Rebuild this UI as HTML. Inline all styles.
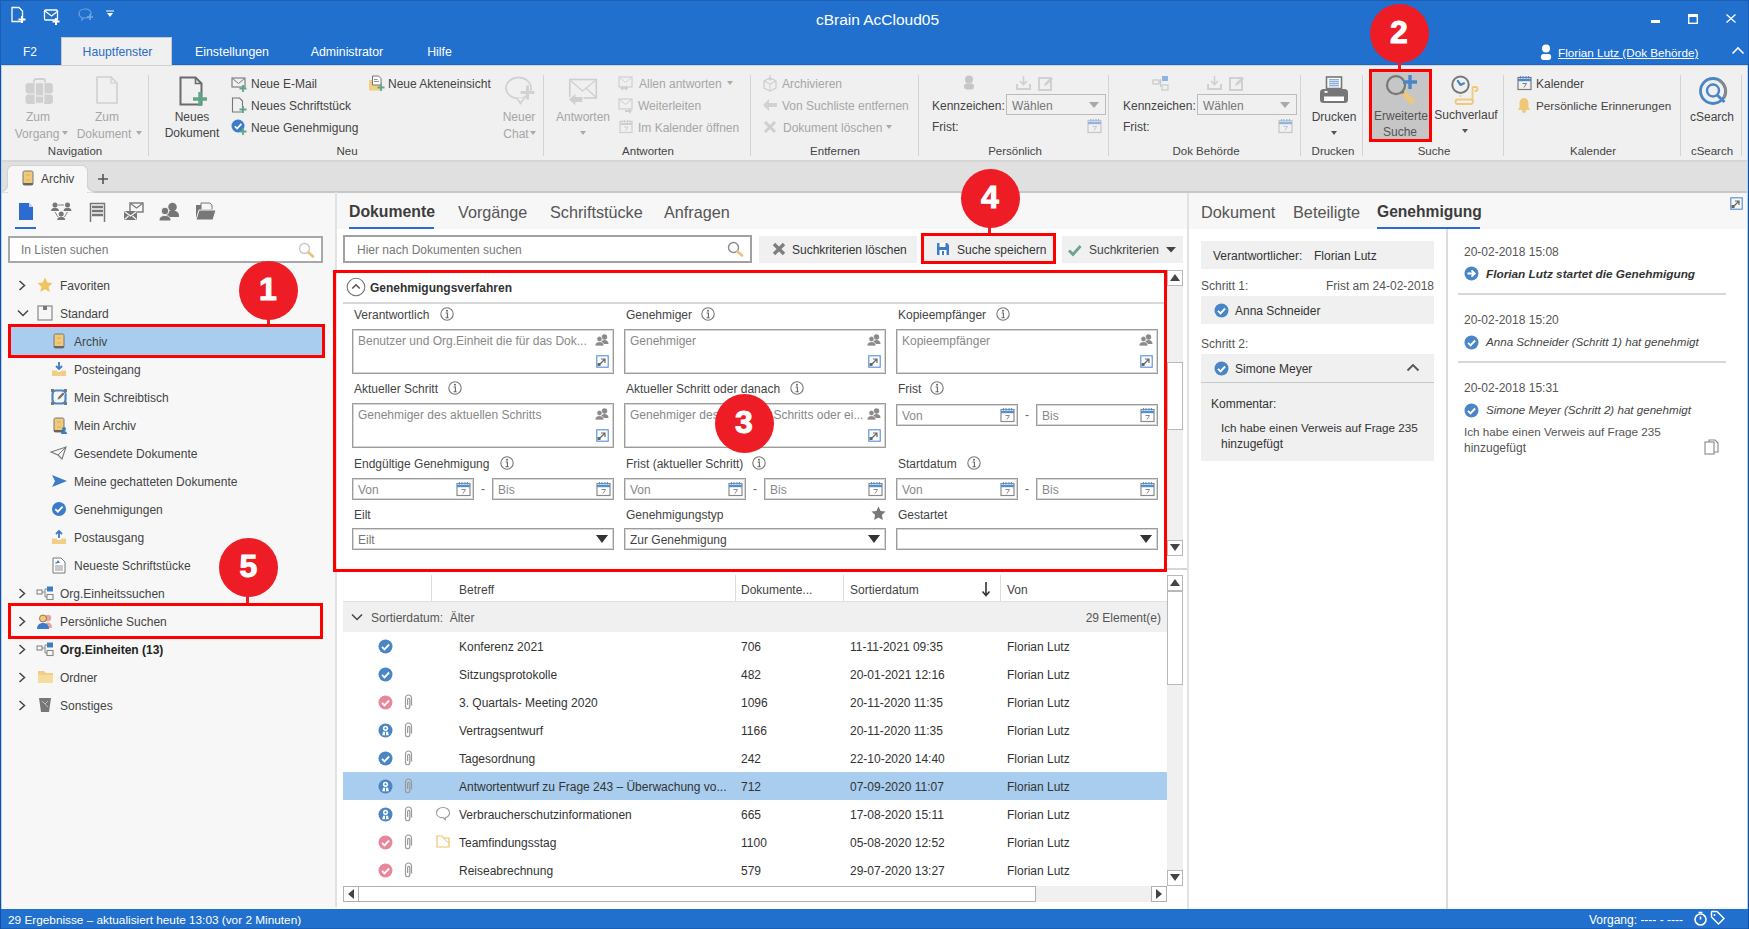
<!DOCTYPE html>
<html><head><meta charset="utf-8"><title>cBrain AcCloud05</title>
<style>
html,body{margin:0;padding:0;}
body{width:1749px;height:929px;position:relative;overflow:hidden;background:#f0f0f0;font-family:'Liberation Sans', sans-serif;}
.t{position:absolute;white-space:nowrap;height:20px;line-height:20px;font-family:'Liberation Sans', sans-serif;}
svg{overflow:visible}
</style></head><body>
<div style="position:absolute;left:0px;top:0px;width:1749px;height:65px;background:#2170ce;"></div>
<div style="position:absolute;left:0px;top:0px;width:1749px;height:1px;background:#1a5fb4;"></div>
<svg style="position:absolute;left:10px;top:6px" width="18" height="18" viewBox="0 0 18 18"><path d="M2 1.5h7l3.5 3.5v10.5h-10.5z" fill="none" stroke="#fff" stroke-width="1.3"/><path d="M12 10v7M8.5 13.5h7" stroke="#fff" stroke-width="2"/></svg>
<svg style="position:absolute;left:43px;top:8px" width="18" height="18" viewBox="0 0 18 18"><rect x="1.5" x2="" y="2" width="13" height="10" rx="1" fill="none" stroke="#fff" stroke-width="1.3"/><path d="M2 3l6.5 5 6.5-5" fill="none" stroke="#fff" stroke-width="1.2"/><path d="M13 10v7M9.5 13.5h7" stroke="#fff" stroke-width="2"/></svg>
<svg style="position:absolute;left:77px;top:6px" width="18" height="18" viewBox="0 0 18 18"><path d="M8 3c4 0 6 2.2 6 4.6S12 12 8 12c-.6 0-1 0-1.5-.1L5 14v-2.5C3 10.8 2 9.2 2 7.6 2 5.2 4 3 8 3z" fill="none" stroke="#6d9fdc" stroke-width="1.2"/><path d="M13 8v6M10 11h6" stroke="#7aa7df" stroke-width="1.6"/></svg>
<svg style="position:absolute;left:106px;top:10px" width="10" height="9" viewBox="0 0 10 9"><path d="M0 1h8" stroke="#fff" stroke-width="1"/><path d="M1 3h6l-3 4z" fill="#fff"/></svg>
<div class="t" style="left:577.5px;width:600px;text-align:center;top:10.0px;font-size:15.5px;color:#fff;font-weight:normal;font-style:normal;">cBrain AcCloud05</div>
<div style="position:absolute;left:1651px;top:20px;width:9px;height:3px;background:#fff;"></div>
<svg style="position:absolute;left:1688px;top:14px" width="10" height="10" viewBox="0 0 10 10"><rect x="0.7" y="0.7" width="8.6" height="8.6" fill="none" stroke="#fff" stroke-width="1.4"/><rect x="0" y="0" width="10" height="3" fill="#fff"/></svg>
<svg style="position:absolute;left:1726px;top:14px" width="10" height="9" viewBox="0 0 10 9"><path d="M0.5 0.5l9 8M9.5 0.5l-9 8" stroke="#fff" stroke-width="1.3"/></svg>
<div style="position:absolute;left:61px;top:37px;width:111px;height:28px;background:#f0f0f0;border:1px solid #c9c9c9;box-sizing:border-box;border-bottom:none;"></div>
<div class="t" style="left:-270px;width:600px;text-align:center;top:42.0px;font-size:12px;color:#fff;font-weight:normal;font-style:normal;">F2</div>
<div class="t" style="left:-182.5px;width:600px;text-align:center;top:42.0px;font-size:12.2px;color:#2b6cc4;font-weight:normal;font-style:normal;">Hauptfenster</div>
<div class="t" style="left:-68px;width:600px;text-align:center;top:42.0px;font-size:12.3px;color:#fff;font-weight:normal;font-style:normal;">Einstellungen</div>
<div class="t" style="left:47px;width:600px;text-align:center;top:42.0px;font-size:12.3px;color:#fff;font-weight:normal;font-style:normal;">Administrator</div>
<div class="t" style="left:139.5px;width:600px;text-align:center;top:42.0px;font-size:12.3px;color:#fff;font-weight:normal;font-style:normal;">Hilfe</div>
<svg style="position:absolute;left:1538px;top:44px" width="16" height="17" viewBox="0 0 16 17"><circle cx="8" cy="4.6" r="4" fill="#fff"/><rect x="2.8" y="10" width="10.4" height="6" rx="3" fill="#fff"/></svg>
<div class="t" style="left:1558px;top:43.0px;font-size:11.7px;color:#fff;font-weight:normal;font-style:normal;text-decoration:underline;">Florian Lutz (Dok Behörde)</div>
<svg style="position:absolute;left:1731px;top:46px" width="14" height="9" viewBox="0 0 14 9"><path d="M1.5 7.5l5.5-5.5 5.5 5.5" fill="none" stroke="#fff" stroke-width="1.6"/></svg>
<div style="position:absolute;left:0px;top:65px;width:1749px;height:96px;background:#f0f0f0;"></div>
<div style="position:absolute;left:0px;top:64px;width:61px;height:1px;background:#1b66c9;"></div>
<div style="position:absolute;left:172px;top:64px;width:1577px;height:1px;background:#1b66c9;"></div>
<div style="position:absolute;left:0px;top:65px;width:1749px;height:1px;background:#d2d2d2;"></div>
<div style="position:absolute;left:0px;top:160px;width:1749px;height:1px;background:#d5d5d5;"></div>
<svg style="position:absolute;left:24px;top:77px" width="31" height="28" viewBox="0 0 31 28"><rect x="1.5" y="6" width="27.5" height="10.5" rx="3" fill="#d0d0d0"/><rect x="1.5" y="17.5" width="27.5" height="9.5" rx="3" fill="#d0d0d0"/><path d="M10 5.5V4a2 2 0 0 1 2-2h7a2 2 0 0 1 2 2v1.5" fill="none" stroke="#d0d0d0" stroke-width="1.8"/><rect x="11.2" y="5.5" width="8.6" height="21" rx="1.5" fill="#d0d0d0" stroke="#ececec" stroke-width="1.4"/><path d="M11.5 19h8" stroke="#ececec" stroke-width="1.2"/></svg>
<div class="t" style="left:-262px;width:600px;text-align:center;top:107.0px;font-size:12px;color:#a6a6a6;font-weight:normal;font-style:normal;">Zum</div>
<div class="t" style="left:-263px;width:600px;text-align:center;top:123.5px;font-size:12px;color:#a6a6a6;font-weight:normal;font-style:normal;">Vorgang</div>
<svg style="position:absolute;left:62.0px;top:131px" width="6" height="4" viewBox="0 0 6 4"><path d="M0 0h6l-3.0 4z" fill="#aaa"/></svg>
<svg style="position:absolute;left:96px;top:76px" width="23" height="28" viewBox="0 0 23 28"><path d="M1 1h14l6 6v20H1z" fill="none" stroke="#d0d0d0" stroke-width="1.6"/><path d="M15 1v6h6" fill="none" stroke="#d0d0d0" stroke-width="1.2"/></svg>
<div class="t" style="left:-193px;width:600px;text-align:center;top:107.0px;font-size:12px;color:#a6a6a6;font-weight:normal;font-style:normal;">Zum</div>
<div class="t" style="left:-196px;width:600px;text-align:center;top:123.5px;font-size:12px;color:#a6a6a6;font-weight:normal;font-style:normal;">Dokument</div>
<svg style="position:absolute;left:136.0px;top:131px" width="6" height="4" viewBox="0 0 6 4"><path d="M0 0h6l-3.0 4z" fill="#aaa"/></svg>
<div class="t" style="left:-225px;width:600px;text-align:center;top:140.5px;font-size:11.5px;color:#444;font-weight:normal;font-style:normal;">Navigation</div>
<div style="position:absolute;left:148px;top:75px;width:1px;height:81px;background:#d4d4d4;"></div>
<svg style="position:absolute;left:179px;top:76px" width="30" height="32" viewBox="0 0 30 32"><path d="M1.5 1.5h15l6 6v21h-21z" fill="none" stroke="#6b6b6b" stroke-width="2"/><path d="M16.5 1.5v6h6" fill="none" stroke="#6b6b6b" stroke-width="1.6"/><path d="M21 16v14M14 23h14" stroke="#5fa688" stroke-width="3.4"/></svg>
<div class="t" style="left:-108px;width:600px;text-align:center;top:107.0px;font-size:12px;color:#444;font-weight:normal;font-style:normal;">Neues</div>
<div class="t" style="left:-108px;width:600px;text-align:center;top:122.5px;font-size:12px;color:#444;font-weight:normal;font-style:normal;">Dokument</div>
<svg style="position:absolute;left:231px;top:76px" width="17" height="16" viewBox="0 0 17 16"><rect x="1" y="2" width="13" height="9" fill="none" stroke="#777" stroke-width="1.1"/><path d="M1.5 2.5l6 5 6-5" fill="none" stroke="#777" stroke-width="1"/><path d="M12 9v7M8.5 12.5h7" stroke="#5fa688" stroke-width="1.8"/></svg>
<div class="t" style="left:251px;top:74.0px;font-size:12px;color:#444;font-weight:normal;font-style:normal;">Neue E-Mail</div>
<svg style="position:absolute;left:231px;top:97px" width="17" height="17" viewBox="0 0 17 17"><path d="M1.5 1h7l3 3v11h-10z" fill="none" stroke="#777" stroke-width="1.1"/><path d="M12 9v7M8.5 12.5h7" stroke="#5fa688" stroke-width="1.8"/></svg>
<div class="t" style="left:251px;top:96.0px;font-size:12px;color:#444;font-weight:normal;font-style:normal;">Neues Schriftstück</div>
<svg style="position:absolute;left:231px;top:119px" width="17" height="17" viewBox="0 0 17 17"><circle cx="7" cy="7" r="6.5" fill="#3d7cc9"/><path d="M3.8 7.2l2.3 2.3 4.3-4.6" fill="none" stroke="#fff" stroke-width="1.6"/><path d="M12 9v7M8.5 12.5h7" stroke="#5fa688" stroke-width="1.8"/></svg>
<div class="t" style="left:251px;top:118.0px;font-size:12px;color:#444;font-weight:normal;font-style:normal;">Neue Genehmigung</div>
<svg style="position:absolute;left:368px;top:75px" width="17" height="17" viewBox="0 0 17 17"><path d="M1 5h4l1.5 1.5H14v9H1z" fill="#f0cf85"/><path d="M4.5 1h6l2.5 2.5V10h-8.5z" fill="#fff" stroke="#777" stroke-width="1"/><path d="M6 4.5h3.5M6 6.5h5" stroke="#888" stroke-width=".9"/><path d="M13 9v7M9.5 12.5h7" stroke="#5fa688" stroke-width="1.8"/></svg>
<div class="t" style="left:388px;top:74.0px;font-size:12px;color:#444;font-weight:normal;font-style:normal;">Neue Akteneinsicht</div>
<svg style="position:absolute;left:504px;top:76px" width="32" height="30" viewBox="0 0 32 30"><ellipse cx="14.5" cy="12" rx="12.5" ry="10.5" fill="none" stroke="#d2d2d2" stroke-width="1.8"/><path d="M13 22L16.5 27.5L20.5 21.5" fill="#f0f0f0" stroke="#d2d2d2" stroke-width="1.6"/><path d="M23.5 9.5v14M16.5 16.5h14" stroke="#d2d2d2" stroke-width="3"/></svg>
<div class="t" style="left:219px;width:600px;text-align:center;top:107.0px;font-size:12px;color:#a6a6a6;font-weight:normal;font-style:normal;">Neuer</div>
<div class="t" style="left:216px;width:600px;text-align:center;top:123.5px;font-size:12px;color:#a6a6a6;font-weight:normal;font-style:normal;">Chat</div>
<svg style="position:absolute;left:530.0px;top:131px" width="6" height="4" viewBox="0 0 6 4"><path d="M0 0h6l-3.0 4z" fill="#aaa"/></svg>
<div class="t" style="left:47px;width:600px;text-align:center;top:140.5px;font-size:11.5px;color:#444;font-weight:normal;font-style:normal;">Neu</div>
<div style="position:absolute;left:543px;top:75px;width:1px;height:81px;background:#d4d4d4;"></div>
<svg style="position:absolute;left:567px;top:77px" width="32" height="30" viewBox="0 0 32 30"><rect x="2.8" y="2.5" width="26.5" height="18.5" fill="none" stroke="#cfcfcf" stroke-width="1.7"/><path d="M3.5 3.5L15.5 14L28.5 3.5M19.5 11.5L28.5 20" fill="none" stroke="#cfcfcf" stroke-width="1.3"/><path d="M1 22.5L9 15.5v4h7v6h-7v4z" fill="#cfcfcf" stroke="#f0f0f0" stroke-width="1.2"/></svg>
<div class="t" style="left:283px;width:600px;text-align:center;top:107.0px;font-size:12px;color:#a6a6a6;font-weight:normal;font-style:normal;">Antworten</div>
<svg style="position:absolute;left:580.0px;top:131px" width="6" height="4" viewBox="0 0 6 4"><path d="M0 0h6l-3.0 4z" fill="#aaa"/></svg>
<svg style="position:absolute;left:618px;top:76px" width="16" height="16" viewBox="0 0 16 16"><rect x="1" y="1" width="13" height="10" fill="none" stroke="#cfcfcf" stroke-width="1.2"/><path d="M1.5 1.5l6 5 6-5" fill="none" stroke="#cfcfcf"/><path d="M2 12l3-3v2h5v2H5v2z M6 12l3-3v6z" fill="#cfcfcf"/></svg>
<div class="t" style="left:639px;top:74.0px;font-size:12px;color:#a6a6a6;font-weight:normal;font-style:normal;">Allen antworten</div>
<svg style="position:absolute;left:727.0px;top:81px" width="6" height="4" viewBox="0 0 6 4"><path d="M0 0h6l-3.0 4z" fill="#aaa"/></svg>
<svg style="position:absolute;left:618px;top:98px" width="16" height="16" viewBox="0 0 16 16"><rect x="1" y="1" width="13" height="10" fill="none" stroke="#cfcfcf" stroke-width="1.2"/><path d="M1.5 1.5l6 5 6-5" fill="none" stroke="#cfcfcf"/><path d="M14 13l-3-3v2H7v2h4v2z" fill="#cfcfcf"/></svg>
<div class="t" style="left:638px;top:96.0px;font-size:12px;color:#a6a6a6;font-weight:normal;font-style:normal;">Weiterleiten</div>
<svg style="position:absolute;left:619px;top:119px" width="15" height="15" viewBox="0 0 15 15"><rect x="1" y="2.5" width="12" height="11" fill="none" stroke="#cfcfcf" stroke-width="1.2"/><path d="M1 5h12" stroke="#cfcfcf" stroke-width="2"/><path d="M3 1v2.5M5.5 1v2.5M8.5 1v2.5M11 1v2.5" stroke="#cfcfcf"/><path d="M5 8h4l-2.5 4" fill="none" stroke="#cfcfcf"/></svg>
<div class="t" style="left:638px;top:118.0px;font-size:12px;color:#a6a6a6;font-weight:normal;font-style:normal;">Im Kalender öffnen</div>
<div class="t" style="left:348px;width:600px;text-align:center;top:140.5px;font-size:11.5px;color:#444;font-weight:normal;font-style:normal;">Antworten</div>
<div style="position:absolute;left:750px;top:75px;width:1px;height:81px;background:#d4d4d4;"></div>
<svg style="position:absolute;left:762px;top:75px" width="16" height="16" viewBox="0 0 16 16"><path d="M2 6l6-3 6 3v7l-6 3-6-3z" fill="none" stroke="#cfcfcf" stroke-width="1.3"/><path d="M2 6l6 3 6-3M8 9v7" fill="none" stroke="#cfcfcf" stroke-width="1.1"/><path d="M8 0v5M6 3l2 2 2-2" fill="none" stroke="#cfcfcf" stroke-width="1.2"/></svg>
<div class="t" style="left:782px;top:74.0px;font-size:12px;color:#a6a6a6;font-weight:normal;font-style:normal;">Archivieren</div>
<svg style="position:absolute;left:762px;top:98px" width="16" height="14" viewBox="0 0 16 14"><path d="M1 7l6-6v4h8v4H7v4z" fill="#d2d2d2"/></svg>
<div class="t" style="left:782px;top:96.0px;font-size:12px;color:#a6a6a6;font-weight:normal;font-style:normal;">Von Suchliste entfernen</div>
<svg style="position:absolute;left:763px;top:120px" width="14" height="14" viewBox="0 0 14 14"><path d="M2 2l10 10M12 2L2 12" stroke="#cfcfcf" stroke-width="3"/></svg>
<div class="t" style="left:783px;top:118.0px;font-size:12px;color:#a6a6a6;font-weight:normal;font-style:normal;">Dokument löschen</div>
<svg style="position:absolute;left:886.0px;top:125px" width="6" height="4" viewBox="0 0 6 4"><path d="M0 0h6l-3.0 4z" fill="#aaa"/></svg>
<div class="t" style="left:535px;width:600px;text-align:center;top:140.5px;font-size:11.5px;color:#444;font-weight:normal;font-style:normal;">Entfernen</div>
<div style="position:absolute;left:918px;top:75px;width:1px;height:81px;background:#d4d4d4;"></div>
<svg style="position:absolute;left:962px;top:75px" width="14" height="16" viewBox="0 0 14 16"><circle cx="7" cy="4.6" r="4" fill="#c6c6c6"/><rect x="2" y="8.6" width="10" height="6" rx="3" fill="#c6c6c6"/></svg>
<svg style="position:absolute;left:1016px;top:76px" width="15" height="14" viewBox="0 0 15 14"><path d="M7.5 0v8M4 5l3.5 3.5L11 5" fill="none" stroke="#d0d0d0" stroke-width="1.6"/><path d="M1 8v5h13V8" fill="none" stroke="#d0d0d0" stroke-width="2"/></svg>
<svg style="position:absolute;left:1038px;top:76px" width="16" height="15" viewBox="0 0 16 15"><rect x="1" y="2" width="12" height="12" fill="none" stroke="#d0d0d0" stroke-width="2"/><path d="M6 10l1-3 6-6 2 2-6 6z" fill="#d0d0d0"/></svg>
<div class="t" style="left:932px;top:96.0px;font-size:12px;color:#444;font-weight:normal;font-style:normal;">Kennzeichen:</div>
<div style="position:absolute;left:1006px;top:94px;width:100px;height:21px;background:#f0f0f0;border:1.5px solid #bcbcbc;box-sizing:border-box;"></div>
<div class="t" style="left:1012px;top:95.5px;font-size:12px;color:#777;font-weight:normal;font-style:normal;">Wählen</div>
<svg style="position:absolute;left:1089px;top:102px" width="10" height="6" viewBox="0 0 10 6"><path d="M0 0h10l-5 6z" fill="#a8a8a8"/></svg>
<div class="t" style="left:932px;top:117.0px;font-size:12px;color:#444;font-weight:normal;font-style:normal;">Frist:</div>
<svg style="position:absolute;left:1087px;top:118px" width="15" height="15" viewBox="0 0 15 15"><rect x="1" y="2.5" width="13" height="12" fill="none" stroke="#c6c6c6" stroke-width="1.2"/><path d="M1 5h13" stroke="#8fb4e0" stroke-width="2.4"/><path d="M3.5 1v2.5M6 1v2.5M9 1v2.5M11.5 1v2.5" stroke="#8fb4e0"/><path d="M5.5 8.5h4l-2.5 4" fill="none" stroke="#c6c6c6" stroke-width="1"/></svg>
<div class="t" style="left:715px;width:600px;text-align:center;top:140.5px;font-size:11.5px;color:#444;font-weight:normal;font-style:normal;">Persönlich</div>
<div style="position:absolute;left:1108px;top:75px;width:1px;height:81px;background:#d4d4d4;"></div>
<svg style="position:absolute;left:1152px;top:75px" width="17" height="16" viewBox="0 0 17 16"><rect x="1" y="5" width="6" height="4" fill="none" stroke="#c9c9c9" stroke-width="1.2"/><rect x="10" y="1" width="6" height="5" fill="#8fb4e0"/><rect x="10" y="10" width="6" height="5" fill="none" stroke="#c9c9c9" stroke-width="1.2"/><path d="M7 7h3M8.5 4v8" fill="none" stroke="#c9c9c9"/></svg>
<svg style="position:absolute;left:1207px;top:76px" width="15" height="14" viewBox="0 0 15 14"><path d="M7.5 0v8M4 5l3.5 3.5L11 5" fill="none" stroke="#d0d0d0" stroke-width="1.6"/><path d="M1 8v5h13V8" fill="none" stroke="#d0d0d0" stroke-width="2"/></svg>
<svg style="position:absolute;left:1229px;top:76px" width="16" height="15" viewBox="0 0 16 15"><rect x="1" y="2" width="12" height="12" fill="none" stroke="#d0d0d0" stroke-width="2"/><path d="M6 10l1-3 6-6 2 2-6 6z" fill="#d0d0d0"/></svg>
<div class="t" style="left:1123px;top:96.0px;font-size:12px;color:#444;font-weight:normal;font-style:normal;">Kennzeichen:</div>
<div style="position:absolute;left:1197px;top:94px;width:100px;height:21px;background:#f0f0f0;border:1.5px solid #bcbcbc;box-sizing:border-box;"></div>
<div class="t" style="left:1203px;top:95.5px;font-size:12px;color:#777;font-weight:normal;font-style:normal;">Wählen</div>
<svg style="position:absolute;left:1280px;top:102px" width="10" height="6" viewBox="0 0 10 6"><path d="M0 0h10l-5 6z" fill="#a8a8a8"/></svg>
<div class="t" style="left:1123px;top:117.0px;font-size:12px;color:#444;font-weight:normal;font-style:normal;">Frist:</div>
<svg style="position:absolute;left:1278px;top:118px" width="15" height="15" viewBox="0 0 15 15"><rect x="1" y="2.5" width="13" height="12" fill="none" stroke="#c6c6c6" stroke-width="1.2"/><path d="M1 5h13" stroke="#8fb4e0" stroke-width="2.4"/><path d="M3.5 1v2.5M6 1v2.5M9 1v2.5M11.5 1v2.5" stroke="#8fb4e0"/><path d="M5.5 8.5h4l-2.5 4" fill="none" stroke="#c6c6c6" stroke-width="1"/></svg>
<div class="t" style="left:906px;width:600px;text-align:center;top:140.5px;font-size:11.5px;color:#444;font-weight:normal;font-style:normal;">Dok Behörde</div>
<div style="position:absolute;left:1300px;top:75px;width:1px;height:81px;background:#d4d4d4;"></div>
<svg style="position:absolute;left:1319px;top:76px" width="30" height="28" viewBox="0 0 30 28"><rect x="7.5" y="1" width="15" height="11.5" fill="#fff" stroke="#777" stroke-width="1.6"/><path d="M10 3.8h10M10 5.8h10M10 7.8h10M10 9.8h10" stroke="#5b8fd0" stroke-width="1"/><rect x="1" y="13" width="28" height="14" rx="3.5" fill="#777"/><rect x="5" y="20.5" width="20" height="4.5" fill="#fff"/><rect x="5.5" y="15" width="3" height="1.8" fill="#fff"/></svg>
<div class="t" style="left:1034px;width:600px;text-align:center;top:107.0px;font-size:12px;color:#444;font-weight:normal;font-style:normal;">Drucken</div>
<svg style="position:absolute;left:1331.0px;top:131px" width="6" height="4" viewBox="0 0 6 4"><path d="M0 0h6l-3.0 4z" fill="#555"/></svg>
<div class="t" style="left:1033px;width:600px;text-align:center;top:140.5px;font-size:11.5px;color:#444;font-weight:normal;font-style:normal;">Drucken</div>
<div style="position:absolute;left:1362px;top:75px;width:1px;height:81px;background:#d4d4d4;"></div>
<div style="position:absolute;left:1372px;top:72px;width:57px;height:67px;background:#c6c6c6;"></div>
<svg style="position:absolute;left:1385px;top:74px" width="33" height="32" viewBox="0 0 33 32"><circle cx="11" cy="11.2" r="9" fill="none" stroke="#777" stroke-width="2.2"/><path d="M16.5 17l2.5 2.5" stroke="#777" stroke-width="2.6"/><path d="M18.7 19.2L28.5 29" stroke="#f0c87a" stroke-width="5.2"/><path d="M25 1v14M18 8h14" stroke="#4a86c5" stroke-width="3.4"/></svg>
<div class="t" style="left:1101px;width:600px;text-align:center;top:106.0px;font-size:12px;color:#555;font-weight:normal;font-style:normal;">Erweiterte</div>
<div class="t" style="left:1100px;width:600px;text-align:center;top:121.5px;font-size:12px;color:#555;font-weight:normal;font-style:normal;">Suche</div>
<svg style="position:absolute;left:1450px;top:74px" width="32" height="32" viewBox="0 0 32 32"><circle cx="10.5" cy="10.7" r="8.2" fill="none" stroke="#777" stroke-width="2"/><path d="M10.5 10.9L7.8 6.8M10.5 10.9L14 9.3" stroke="#4a86c5" stroke-width="2.2" stroke-linecap="round"/><path d="M22.5 13v13.5M22.5 13h3a2 2 0 0 1 0 4h-1" fill="none" stroke="#f0c87a" stroke-width="1.8"/><rect x="5.5" y="25.5" width="17.5" height="4.5" rx="2.2" fill="none" stroke="#f0c87a" stroke-width="1.8"/><circle cx="10.5" cy="22" r="1" fill="#f0c87a"/></svg>
<div class="t" style="left:1166px;width:600px;text-align:center;top:105.0px;font-size:12px;color:#444;font-weight:normal;font-style:normal;">Suchverlauf</div>
<svg style="position:absolute;left:1462.0px;top:129px" width="6" height="4" viewBox="0 0 6 4"><path d="M0 0h6l-3.0 4z" fill="#555"/></svg>
<div class="t" style="left:1134px;width:600px;text-align:center;top:140.5px;font-size:11.5px;color:#444;font-weight:normal;font-style:normal;">Suche</div>
<div style="position:absolute;left:1503px;top:75px;width:1px;height:81px;background:#d4d4d4;"></div>
<svg style="position:absolute;left:1517px;top:75px" width="15" height="15" viewBox="0 0 15 15"><rect x="1" y="2.5" width="13" height="12" fill="none" stroke="#7a7a7a" stroke-width="1.2"/><path d="M1 5h13" stroke="#4a86d0" stroke-width="2.4"/><path d="M3.5 1v2.5M6 1v2.5M9 1v2.5M11.5 1v2.5" stroke="#4a86d0"/><path d="M5.5 8.5h4l-2.5 4" fill="none" stroke="#7a7a7a" stroke-width="1"/></svg>
<div class="t" style="left:1536px;top:74.0px;font-size:12px;color:#444;font-weight:normal;font-style:normal;">Kalender</div>
<svg style="position:absolute;left:1517px;top:97px" width="14" height="16" viewBox="0 0 14 16"><path d="M7 1c3 0 4.5 2.5 4.5 5.5v4L13 13H1l1.5-2.5v-4C2.5 3.5 4 1 7 1z" fill="#f0c87a"/><circle cx="7" cy="14" r="2" fill="#f0c87a"/></svg>
<div class="t" style="left:1536px;top:96.0px;font-size:11.75px;color:#444;font-weight:normal;font-style:normal;">Persönliche Erinnerungen</div>
<div class="t" style="left:1293px;width:600px;text-align:center;top:140.5px;font-size:11.5px;color:#444;font-weight:normal;font-style:normal;">Kalender</div>
<div style="position:absolute;left:1680px;top:75px;width:1px;height:81px;background:#d4d4d4;"></div>
<svg style="position:absolute;left:1698px;top:76px" width="30" height="30" viewBox="0 0 30 30"><circle cx="15" cy="15" r="12.5" fill="none" stroke="#4a86c5" stroke-width="2.8"/><path d="M21 4.5A12.5 12.5 0 0 1 26 22" fill="none" stroke="#888" stroke-width="2.8"/><circle cx="15" cy="14.5" r="6" fill="none" stroke="#4a86c5" stroke-width="2.4"/><path d="M19 19l7.5 7" stroke="#4a86c5" stroke-width="3"/></svg>
<div class="t" style="left:1412px;width:600px;text-align:center;top:107.0px;font-size:12px;color:#444;font-weight:normal;font-style:normal;">cSearch</div>
<div class="t" style="left:1412px;width:600px;text-align:center;top:140.5px;font-size:11.5px;color:#444;font-weight:normal;font-style:normal;">cSearch</div>
<div style="position:absolute;left:1741px;top:75px;width:1px;height:81px;background:#d4d4d4;"></div>
<div style="position:absolute;left:0px;top:161px;width:1749px;height:30px;background:#e0e0e0;"></div>
<div style="position:absolute;left:0px;top:161px;width:1749px;height:1px;background:#d6d6d6;"></div>
<div style="position:absolute;left:94px;top:191px;width:1655px;height:2px;background:#c8c8c8;"></div>
<div style="position:absolute;left:0px;top:186px;width:94px;height:7px;background:#e0e0e0;"></div>
<div style="position:absolute;left:7px;top:165px;width:81px;height:28px;background:#f7f7f7;border-radius:6px 6px 0 0;border:1px solid #d2d2d2;border-bottom:none;box-sizing:border-box"></div>
<svg style="position:absolute;left:22px;top:170px" width="12" height="16" viewBox="0 0 12 16"><rect x="1" y="1" width="10" height="14" rx="1.5" fill="#f1c97a" stroke="#777" stroke-width="1"/><path d="M1 14h10" stroke="#666" stroke-width="2"/><path d="M4 5h4M4 10h4" stroke="#d9a950" stroke-width=".8"/></svg>
<div class="t" style="left:41px;top:169.0px;font-size:12px;color:#444;font-weight:normal;font-style:normal;">Archiv</div>
<svg style="position:absolute;left:87px;top:185px" width="8" height="8" viewBox="0 0 8 8"><path d="M0 0A7 7 0 0 0 7 7H0z" fill="#f7f7f7"/><path d="M0.5 0A6.5 6.5 0 0 0 7 6.5" fill="none" stroke="#cfcfcf"/></svg>
<svg style="position:absolute;left:0px;top:185px" width="8" height="8" viewBox="0 0 8 8"><path d="M8 0A7 7 0 0 1 1 7H8z" fill="#f7f7f7"/><path d="M7.5 0A6.5 6.5 0 0 1 1 6.5" fill="none" stroke="#cfcfcf"/></svg>
<svg style="position:absolute;left:97px;top:173px" width="12" height="12" viewBox="0 0 12 12"><path d="M6 1v10M1 6h10" stroke="#555" stroke-width="1.6"/></svg>
<div style="position:absolute;left:0px;top:193px;width:1749px;height:716px;background:#f7f7f7;"></div>
<div style="position:absolute;left:335px;top:192px;width:2px;height:715px;background:#e2e2e2;"></div>
<div style="position:absolute;left:1187px;top:193px;width:2px;height:716px;background:#e2e2e2;"></div>
<svg style="position:absolute;left:18px;top:202px" width="16" height="19" viewBox="0 0 16 19"><path d="M1 1h10l4 4v13H1z" fill="#2d6ccf"/><path d="M11 1v4h4" fill="#fff" opacity=".7"/></svg>
<div style="position:absolute;left:15px;top:227px;width:21px;height:2px;background:#2d6ccf;"></div>
<svg style="position:absolute;left:51px;top:202px" width="21" height="20" viewBox="0 0 21 20"><circle cx="4" cy="3" r="2.5" fill="#777"/><circle cx="16.5" cy="3" r="2.5" fill="#777"/><circle cx="10.2" cy="12" r="2.5" fill="#777"/><path d="M0 9c0-2.5 2-3.3 4-3.3s4 .8 4 3.3zM12.5 9c0-2.5 2-3.3 4-3.3s4 .8 4 3.3zM6.2 18c0-2.5 2-3.3 4-3.3s4 .8 4 3.3z" fill="#777"/><path d="M7 3h6M4 10l3 5M16.5 10l-3 5" fill="none" stroke="#777" stroke-width=".9"/></svg>
<svg style="position:absolute;left:89px;top:202px" width="17" height="20" viewBox="0 0 17 20"><path d="M1.5 20V1.5h14V20" fill="none" stroke="#777" stroke-width="1.5"/><path d="M3 5h11M3 9h11M3 13h11" stroke="#777" stroke-width="2.6"/></svg>
<svg style="position:absolute;left:123px;top:202px" width="21" height="19" viewBox="0 0 21 19"><rect x="7" y="1" width="13" height="9" fill="#f7f7f7" stroke="#777" stroke-width="1.4"/><path d="M7.5 1.5l6 4.5 6-4.5" fill="none" stroke="#777" stroke-width="1.2"/><rect x="1" y="9" width="13" height="9" fill="#777"/><path d="M1.5 9.5l6 4.5 6-4.5M1.5 17.5l4-3.5M13.5 17.5l-4-3.5" fill="none" stroke="#f7f7f7" stroke-width="1.2"/></svg>
<svg style="position:absolute;left:159px;top:202px" width="20" height="19" viewBox="0 0 20 19"><circle cx="13.5" cy="5" r="4.3" fill="#777"/><path d="M7 14c0-4 3-5.5 6.5-5.5S20 10 20 14v1H7z" fill="#777"/><circle cx="6" cy="9" r="3.8" fill="#777" stroke="#f7f7f7" stroke-width="1"/><path d="M0 19c0-4 2.5-5.5 6-5.5s6 1.5 6 5.5z" fill="#777" stroke="#f7f7f7" stroke-width="1"/></svg>
<svg style="position:absolute;left:195px;top:202px" width="21" height="19" viewBox="0 0 21 19"><path d="M1 3h6l2 2h8v13H1z" fill="#777"/><path d="M6 1h9l2 2v5H6z" fill="#f7f7f7" stroke="#777" stroke-width="1"/><path d="M4 8h17l-3 10H1z" fill="#777" stroke="#f7f7f7" stroke-width="1"/></svg>
<div style="position:absolute;left:8px;top:236px;width:315px;height:27px;background:#fff;border:2px solid #a8a8a8;box-sizing:border-box;"></div>
<div class="t" style="left:21px;top:240.0px;font-size:12px;color:#777;font-weight:normal;font-style:normal;">In Listen suchen</div>
<svg style="position:absolute;left:298px;top:242px" width="18" height="16" viewBox="0 0 18 16"><circle cx="6.5" cy="6.5" r="5" fill="none" stroke="#c8c8c8" stroke-width="1.4"/><path d="M10.5 10.5l4.5 4" stroke="#e7c27a" stroke-width="2.6" stroke-linecap="round"/></svg>
<div style="position:absolute;left:10px;top:327px;width:313px;height:28px;background:#a8cdee;"></div>
<svg style="position:absolute;left:18px;top:280px" width="8" height="11" viewBox="0 0 8 11"><path d="M1.5 1l5 4.5-5 4.5" fill="none" stroke="#444" stroke-width="1.5"/></svg>
<svg style="position:absolute;left:37px;top:277px" width="16" height="16" viewBox="0 0 16 16"><path d="M8 .5l2.3 5 5.2.6-3.9 3.6 1.1 5.3L8 12.3 3.3 15l1.1-5.3L.5 6.1l5.2-.6z" fill="#f0c560"/></svg>
<div class="t" style="left:60px;top:276.0px;font-size:12px;color:#444;font-weight:normal;font-style:normal;">Favoriten</div>
<svg style="position:absolute;left:17px;top:309px" width="12" height="8" viewBox="0 0 12 8"><path d="M1 1.5l5 5 5-5" fill="none" stroke="#444" stroke-width="1.5"/></svg>
<svg style="position:absolute;left:37px;top:305px" width="16" height="16" viewBox="0 0 16 16"><rect x="1" y="1" width="14" height="14" fill="none" stroke="#888" stroke-width="1.2"/><rect x="6" y="1" width="4" height="4" fill="#777"/></svg>
<div class="t" style="left:60px;top:304.0px;font-size:12px;color:#444;font-weight:normal;font-style:normal;">Standard</div>
<svg style="position:absolute;left:53px;top:333px" width="14" height="17" viewBox="0 0 14 17"><rect x="1" y="1" width="10" height="14" rx="1.5" fill="#f1c97a" stroke="#777" stroke-width="1"/><path d="M1 14h10" stroke="#666" stroke-width="2"/><path d="M4 5h4M4 10h4" stroke="#d9a950" stroke-width=".8"/></svg>
<div class="t" style="left:74px;top:332.0px;font-size:12px;color:#444;font-weight:normal;font-style:normal;">Archiv</div>
<svg style="position:absolute;left:51px;top:361px" width="16" height="16" viewBox="0 0 16 16"><path d="M8 1v7M5 5l3 3 3-3" fill="none" stroke="#3d7cc9" stroke-width="1.8"/><path d="M1 9.5h4.5l1 1.5h3l1-1.5H15V15H1z" fill="#f0cf85"/></svg>
<div class="t" style="left:74px;top:360.0px;font-size:12px;color:#444;font-weight:normal;font-style:normal;">Posteingang</div>
<svg style="position:absolute;left:51px;top:389px" width="16" height="16" viewBox="0 0 16 16"><rect x="1.5" y="1.5" width="13" height="13" rx="3.5" fill="none" stroke="#4a86c5" stroke-width="2.2"/><path d="M0 0h3v3H0zM13 0h3v3h-3zM0 13h3v3H0zM13 13h3v3h-3z" fill="#777"/><path d="M6 11l1-3 5-5 2 2-5 5z" fill="#777" stroke="#f7f7f7" stroke-width=".6"/></svg>
<div class="t" style="left:74px;top:388.0px;font-size:12px;color:#444;font-weight:normal;font-style:normal;">Mein Schreibtisch</div>
<svg style="position:absolute;left:53px;top:417px" width="14" height="17" viewBox="0 0 14 17"><rect x="1" y="1" width="10" height="14" rx="1.5" fill="#f1c97a" stroke="#777" stroke-width="1"/><path d="M1 14h10" stroke="#666" stroke-width="2"/><path d="M4 5h4M4 10h4" stroke="#d9a950" stroke-width=".8"/><circle cx="11" cy="12" r="2" fill="#3d7cc9"/><path d="M8 17c0-2 1.3-3 3-3s3 1 3 3z" fill="#3d7cc9"/></svg>
<div class="t" style="left:74px;top:416.0px;font-size:12px;color:#444;font-weight:normal;font-style:normal;">Mein Archiv</div>
<svg style="position:absolute;left:50px;top:446px" width="17" height="14" viewBox="0 0 17 14"><path d="M1 6l15-5-4 12-4-4z" fill="none" stroke="#777" stroke-width="1.1"/><path d="M8 9l8-8" stroke="#777" stroke-width="1"/></svg>
<div class="t" style="left:74px;top:444.0px;font-size:12px;color:#444;font-weight:normal;font-style:normal;">Gesendete Dokumente</div>
<svg style="position:absolute;left:51px;top:474px" width="16" height="14" viewBox="0 0 16 14"><path d="M1 1l15 6-15 6 3-6z" fill="#3d7cc9"/></svg>
<div class="t" style="left:74px;top:472.0px;font-size:12px;color:#444;font-weight:normal;font-style:normal;">Meine gechatteten Dokumente</div>
<svg style="position:absolute;left:51px;top:501px" width="16" height="16" viewBox="0 0 16 16"><circle cx="8" cy="8" r="7" fill="#3d7cc9"/><path d="M4.3 8.2l2.5 2.5 4.8-5" fill="none" stroke="#fff" stroke-width="1.8"/></svg>
<div class="t" style="left:74px;top:500.0px;font-size:12px;color:#444;font-weight:normal;font-style:normal;">Genehmigungen</div>
<svg style="position:absolute;left:51px;top:529px" width="16" height="16" viewBox="0 0 16 16"><path d="M8 9V2M5 5l3-3 3 3" fill="none" stroke="#3d7cc9" stroke-width="1.8"/><path d="M1 9.5h4.5l1 1.5h3l1-1.5H15V15H1z" fill="#f0cf85"/></svg>
<div class="t" style="left:74px;top:528.0px;font-size:12px;color:#444;font-weight:normal;font-style:normal;">Postausgang</div>
<svg style="position:absolute;left:52px;top:557px" width="14" height="17" viewBox="0 0 14 17"><path d="M1 1h8l4 4v11H1z" fill="#fff" stroke="#777" stroke-width="1"/><path d="M3 6h3M3 9h8M3 11h8M3 13h8" stroke="#777" stroke-width=".8"/><path d="M6 3l2 3h-4z" fill="#3d7cc9"/></svg>
<div class="t" style="left:74px;top:556.0px;font-size:12px;color:#444;font-weight:normal;font-style:normal;">Neueste Schriftstücke</div>
<svg style="position:absolute;left:18px;top:588px" width="8" height="11" viewBox="0 0 8 11"><path d="M1.5 1l5 4.5-5 4.5" fill="none" stroke="#444" stroke-width="1.5"/></svg>
<svg style="position:absolute;left:36px;top:586px" width="18" height="14" viewBox="0 0 18 14"><rect x="1" y="4" width="5" height="4" fill="none" stroke="#888" stroke-width="1.1"/><rect x="11" y="0.5" width="6" height="5" fill="#3d7cc9"/><rect x="11" y="8.5" width="6" height="5" fill="none" stroke="#888" stroke-width="1.1"/><path d="M6 6h3M9 3v8h2M9 3h2" fill="none" stroke="#888"/></svg>
<div class="t" style="left:60px;top:584.0px;font-size:12px;color:#444;font-weight:normal;font-style:normal;">Org.Einheitssuchen</div>
<svg style="position:absolute;left:18px;top:616px" width="8" height="11" viewBox="0 0 8 11"><path d="M1.5 1l5 4.5-5 4.5" fill="none" stroke="#444" stroke-width="1.5"/></svg>
<svg style="position:absolute;left:37px;top:613px" width="16" height="16" viewBox="0 0 16 16"><circle cx="11" cy="5" r="3.3" fill="#e8a6a0"/><path d="M7 15c0-4 2-5.5 4-5.5s4 1.5 4 5.5z" fill="#e8a6a0"/><circle cx="6" cy="5.5" r="3.5" fill="#f1c97a" stroke="#8a5a3a" stroke-width=".8"/><path d="M0 16c0-4 2.5-6 6-6s6 2 6 6z" fill="#3d7cc9"/></svg>
<div class="t" style="left:60px;top:612.0px;font-size:12px;color:#444;font-weight:normal;font-style:normal;">Persönliche Suchen</div>
<svg style="position:absolute;left:18px;top:644px" width="8" height="11" viewBox="0 0 8 11"><path d="M1.5 1l5 4.5-5 4.5" fill="none" stroke="#444" stroke-width="1.5"/></svg>
<svg style="position:absolute;left:36px;top:642px" width="18" height="14" viewBox="0 0 18 14"><rect x="1" y="4" width="5" height="4" fill="none" stroke="#888" stroke-width="1.1"/><rect x="11" y="0.5" width="6" height="5" fill="#3d7cc9"/><rect x="11" y="8.5" width="6" height="5" fill="none" stroke="#888" stroke-width="1.1"/><path d="M6 6h3M9 3v8h2M9 3h2" fill="none" stroke="#888"/></svg>
<div class="t" style="left:60px;top:640.0px;font-size:12px;color:#222;font-weight:bold;font-style:normal;">Org.Einheiten (13)</div>
<svg style="position:absolute;left:18px;top:672px" width="8" height="11" viewBox="0 0 8 11"><path d="M1.5 1l5 4.5-5 4.5" fill="none" stroke="#444" stroke-width="1.5"/></svg>
<svg style="position:absolute;left:37px;top:669px" width="17" height="15" viewBox="0 0 17 15"><path d="M1 2h6l2 2h7v10H1z" fill="#f0cf85"/><path d="M1 6h15v8H1z" fill="#f6dc9f"/></svg>
<div class="t" style="left:60px;top:668.0px;font-size:12px;color:#444;font-weight:normal;font-style:normal;">Ordner</div>
<svg style="position:absolute;left:18px;top:700px" width="8" height="11" viewBox="0 0 8 11"><path d="M1.5 1l5 4.5-5 4.5" fill="none" stroke="#444" stroke-width="1.5"/></svg>
<svg style="position:absolute;left:38px;top:697px" width="14" height="16" viewBox="0 0 14 16"><path d="M1 1h12l-2 14H3z" fill="#777"/><path d="M4 4l6 6M10 4l-3 3" stroke="#bbb" stroke-width="1"/></svg>
<div class="t" style="left:60px;top:696.0px;font-size:12px;color:#444;font-weight:normal;font-style:normal;">Sonstiges</div>
<div style="position:absolute;left:337px;top:229px;width:850px;height:680px;background:#ffffff;"></div>
<div class="t" style="left:349px;top:202.0px;font-size:15.8px;color:#3c3c3c;font-weight:bold;font-style:normal;">Dokumente</div>
<div class="t" style="left:458px;top:202.0px;font-size:16.2px;color:#555;font-weight:normal;font-style:normal;">Vorgänge</div>
<div class="t" style="left:550px;top:202.0px;font-size:16.2px;color:#555;font-weight:normal;font-style:normal;">Schriftstücke</div>
<div class="t" style="left:664px;top:202.0px;font-size:16.2px;color:#555;font-weight:normal;font-style:normal;">Anfragen</div>
<div style="position:absolute;left:349px;top:227px;width:85px;height:2px;background:#2d6ccf;"></div>
<div style="position:absolute;left:343px;top:235px;width:409px;height:28px;background:#fff;border:2px solid #a0a0a0;box-sizing:border-box;"></div>
<div class="t" style="left:357px;top:240.0px;font-size:12px;color:#777;font-weight:normal;font-style:normal;">Hier nach Dokumenten suchen</div>
<svg style="position:absolute;left:727px;top:241px" width="18" height="16" viewBox="0 0 18 16"><circle cx="6.5" cy="6.5" r="5" fill="none" stroke="#8a8a8a" stroke-width="1.4"/><path d="M10.5 10.5l4.5 4" stroke="#e7c27a" stroke-width="2.6" stroke-linecap="round"/></svg>
<div style="position:absolute;left:759px;top:236px;width:158px;height:27px;background:#f0f0f0;"></div>
<svg style="position:absolute;left:772px;top:242px" width="14" height="14" viewBox="0 0 14 14"><path d="M2 2l10 10M12 2L2 12" stroke="#7f7f7f" stroke-width="3.4"/></svg>
<div class="t" style="left:792px;top:240.0px;font-size:12px;color:#333;font-weight:normal;font-style:normal;">Suchkriterien löschen</div>
<div style="position:absolute;left:924px;top:236px;width:130px;height:27px;background:#f0f0f0;"></div>
<svg style="position:absolute;left:936px;top:242px" width="14" height="14" viewBox="0 0 14 14"><path d="M1 1h10l2 2v10H1z" fill="#3d7cc9"/><rect x="3.5" y="1" width="6" height="4" fill="#fff"/><rect x="3.5" y="8" width="7" height="5" fill="#fff"/><rect x="6" y="9" width="2" height="4" fill="#3d7cc9"/></svg>
<div class="t" style="left:957px;top:240.0px;font-size:12px;color:#333;font-weight:normal;font-style:normal;">Suche speichern</div>
<div style="position:absolute;left:1062px;top:236px;width:121px;height:27px;background:#f0f0f0;"></div>
<svg style="position:absolute;left:1067px;top:243px" width="16" height="13" viewBox="0 0 16 13"><path d="M2 7.5l4 4 7.5-8.5" fill="none" stroke="#6aa590" stroke-width="2.8"/></svg>
<div class="t" style="left:1089px;top:240.0px;font-size:12px;color:#444;font-weight:normal;font-style:normal;">Suchkriterien</div>
<svg style="position:absolute;left:1166px;top:247px" width="10" height="6" viewBox="0 0 10 6"><path d="M0 0h10l-5 5.5z" fill="#444"/></svg>
<div style="position:absolute;left:1167px;top:270px;width:16px;height:286px;background:#f0f0f0;"></div>
<div style="position:absolute;left:1167px;top:270px;width:16px;height:16px;background:#fff;border:1px solid #b8b8b8;box-sizing:border-box;"></div>
<svg style="position:absolute;left:1170px;top:274px" width="10" height="7" viewBox="0 0 10 7"><path d="M0 7h10L5 0z" fill="#444"/></svg>
<div style="position:absolute;left:1167px;top:362px;width:16px;height:68px;background:#fff;border:1px solid #b8b8b8;box-sizing:border-box;"></div>
<div style="position:absolute;left:1167px;top:540px;width:16px;height:16px;background:#fff;border:1px solid #b8b8b8;box-sizing:border-box;"></div>
<svg style="position:absolute;left:1170px;top:544px" width="10" height="7" viewBox="0 0 10 7"><path d="M0 0h10L5 7z" fill="#444"/></svg>
<div style="position:absolute;left:1167px;top:568px;width:20px;height:2px;background:#d6d6d6;"></div>
<svg style="position:absolute;left:346px;top:277px" width="20" height="20" viewBox="0 0 20 20"><circle cx="10" cy="10" r="8.8" fill="none" stroke="#777" stroke-width="1.1"/><path d="M6.3 11.5l3.7-3.7 3.7 3.7" fill="none" stroke="#555" stroke-width="1.6"/></svg>
<div class="t" style="left:370px;top:278.0px;font-size:12px;color:#333;font-weight:bold;font-style:normal;">Genehmigungsverfahren</div>
<div style="position:absolute;left:343px;top:302px;width:821px;height:2px;background:#d8d8d8;"></div>
<div class="t" style="left:354px;top:305.0px;font-size:12px;color:#444;font-weight:normal;font-style:normal;">Verantwortlich</div>
<svg style="position:absolute;left:440px;top:307px" width="14" height="14" viewBox="0 0 14 14"><circle cx="7" cy="7" r="6.2" fill="none" stroke="#777" stroke-width="1.1"/><circle cx="7" cy="3.8" r="1" fill="#666"/><path d="M5.6 6h1.8v4.5M5.5 10.8h3.2" fill="none" stroke="#666" stroke-width="1.1"/></svg>
<div class="t" style="left:626px;top:305.0px;font-size:12px;color:#444;font-weight:normal;font-style:normal;">Genehmiger</div>
<svg style="position:absolute;left:701px;top:307px" width="14" height="14" viewBox="0 0 14 14"><circle cx="7" cy="7" r="6.2" fill="none" stroke="#777" stroke-width="1.1"/><circle cx="7" cy="3.8" r="1" fill="#666"/><path d="M5.6 6h1.8v4.5M5.5 10.8h3.2" fill="none" stroke="#666" stroke-width="1.1"/></svg>
<div class="t" style="left:898px;top:305.0px;font-size:12px;color:#444;font-weight:normal;font-style:normal;">Kopieempfänger</div>
<svg style="position:absolute;left:996px;top:307px" width="14" height="14" viewBox="0 0 14 14"><circle cx="7" cy="7" r="6.2" fill="none" stroke="#777" stroke-width="1.1"/><circle cx="7" cy="3.8" r="1" fill="#666"/><path d="M5.6 6h1.8v4.5M5.5 10.8h3.2" fill="none" stroke="#666" stroke-width="1.1"/></svg>
<div style="position:absolute;left:352px;top:329px;width:262px;height:45px;background:#fff;border:1px solid #9c9c9c;box-sizing:border-box;box-shadow:inset 0 0 0 1px #d6d6d6;"></div>
<div class="t" style="left:358px;top:331.0px;font-size:12px;color:#888;font-weight:normal;font-style:normal;">Benutzer und Org.Einheit die für das Dok...</div>
<svg style="position:absolute;left:595px;top:334px" width="14" height="12" viewBox="0 0 14 12"><circle cx="9.5" cy="3" r="2.7" fill="#8a8a8a"/><path d="M5.5 10c0-3 2-4 4-4s4 1 4 4z" fill="#8a8a8a"/><circle cx="4.5" cy="5" r="2.7" fill="#8a8a8a" stroke="#fff" stroke-width=".7"/><path d="M0 12c0-3 2-4.3 4.5-4.3S9 9 9 12z" fill="#8a8a8a" stroke="#fff" stroke-width=".7"/></svg>
<svg style="position:absolute;left:596px;top:355px" width="13" height="13" viewBox="0 0 13 13"><rect x=".8" y=".8" width="11.4" height="11.4" fill="none" stroke="#4f8fd6" stroke-width="1.1"/><path d="M3 10l6-6M5 4h4v4" fill="none" stroke="#666" stroke-width="1.2"/><rect x="1.5" y="8" width="3" height="3" fill="#666"/></svg>
<div style="position:absolute;left:624px;top:329px;width:262px;height:45px;background:#fff;border:1px solid #9c9c9c;box-sizing:border-box;box-shadow:inset 0 0 0 1px #d6d6d6;"></div>
<div class="t" style="left:630px;top:331.0px;font-size:12px;color:#888;font-weight:normal;font-style:normal;">Genehmiger</div>
<svg style="position:absolute;left:867px;top:334px" width="14" height="12" viewBox="0 0 14 12"><circle cx="9.5" cy="3" r="2.7" fill="#8a8a8a"/><path d="M5.5 10c0-3 2-4 4-4s4 1 4 4z" fill="#8a8a8a"/><circle cx="4.5" cy="5" r="2.7" fill="#8a8a8a" stroke="#fff" stroke-width=".7"/><path d="M0 12c0-3 2-4.3 4.5-4.3S9 9 9 12z" fill="#8a8a8a" stroke="#fff" stroke-width=".7"/></svg>
<svg style="position:absolute;left:868px;top:355px" width="13" height="13" viewBox="0 0 13 13"><rect x=".8" y=".8" width="11.4" height="11.4" fill="none" stroke="#4f8fd6" stroke-width="1.1"/><path d="M3 10l6-6M5 4h4v4" fill="none" stroke="#666" stroke-width="1.2"/><rect x="1.5" y="8" width="3" height="3" fill="#666"/></svg>
<div style="position:absolute;left:896px;top:329px;width:262px;height:45px;background:#fff;border:1px solid #9c9c9c;box-sizing:border-box;box-shadow:inset 0 0 0 1px #d6d6d6;"></div>
<div class="t" style="left:902px;top:331.0px;font-size:12px;color:#888;font-weight:normal;font-style:normal;">Kopieempfänger</div>
<svg style="position:absolute;left:1139px;top:334px" width="14" height="12" viewBox="0 0 14 12"><circle cx="9.5" cy="3" r="2.7" fill="#8a8a8a"/><path d="M5.5 10c0-3 2-4 4-4s4 1 4 4z" fill="#8a8a8a"/><circle cx="4.5" cy="5" r="2.7" fill="#8a8a8a" stroke="#fff" stroke-width=".7"/><path d="M0 12c0-3 2-4.3 4.5-4.3S9 9 9 12z" fill="#8a8a8a" stroke="#fff" stroke-width=".7"/></svg>
<svg style="position:absolute;left:1140px;top:355px" width="13" height="13" viewBox="0 0 13 13"><rect x=".8" y=".8" width="11.4" height="11.4" fill="none" stroke="#4f8fd6" stroke-width="1.1"/><path d="M3 10l6-6M5 4h4v4" fill="none" stroke="#666" stroke-width="1.2"/><rect x="1.5" y="8" width="3" height="3" fill="#666"/></svg>
<div class="t" style="left:354px;top:379.0px;font-size:12px;color:#444;font-weight:normal;font-style:normal;">Aktueller Schritt</div>
<svg style="position:absolute;left:448px;top:381px" width="14" height="14" viewBox="0 0 14 14"><circle cx="7" cy="7" r="6.2" fill="none" stroke="#777" stroke-width="1.1"/><circle cx="7" cy="3.8" r="1" fill="#666"/><path d="M5.6 6h1.8v4.5M5.5 10.8h3.2" fill="none" stroke="#666" stroke-width="1.1"/></svg>
<div class="t" style="left:626px;top:379.0px;font-size:12px;color:#444;font-weight:normal;font-style:normal;">Aktueller Schritt oder danach</div>
<svg style="position:absolute;left:790px;top:381px" width="14" height="14" viewBox="0 0 14 14"><circle cx="7" cy="7" r="6.2" fill="none" stroke="#777" stroke-width="1.1"/><circle cx="7" cy="3.8" r="1" fill="#666"/><path d="M5.6 6h1.8v4.5M5.5 10.8h3.2" fill="none" stroke="#666" stroke-width="1.1"/></svg>
<div class="t" style="left:898px;top:379.0px;font-size:12px;color:#444;font-weight:normal;font-style:normal;">Frist</div>
<svg style="position:absolute;left:930px;top:381px" width="14" height="14" viewBox="0 0 14 14"><circle cx="7" cy="7" r="6.2" fill="none" stroke="#777" stroke-width="1.1"/><circle cx="7" cy="3.8" r="1" fill="#666"/><path d="M5.6 6h1.8v4.5M5.5 10.8h3.2" fill="none" stroke="#666" stroke-width="1.1"/></svg>
<div style="position:absolute;left:352px;top:403px;width:262px;height:45px;background:#fff;border:1px solid #9c9c9c;box-sizing:border-box;box-shadow:inset 0 0 0 1px #d6d6d6;"></div>
<div class="t" style="left:358px;top:405.0px;font-size:12px;color:#888;font-weight:normal;font-style:normal;">Genehmiger des aktuellen Schritts</div>
<svg style="position:absolute;left:595px;top:408px" width="14" height="12" viewBox="0 0 14 12"><circle cx="9.5" cy="3" r="2.7" fill="#8a8a8a"/><path d="M5.5 10c0-3 2-4 4-4s4 1 4 4z" fill="#8a8a8a"/><circle cx="4.5" cy="5" r="2.7" fill="#8a8a8a" stroke="#fff" stroke-width=".7"/><path d="M0 12c0-3 2-4.3 4.5-4.3S9 9 9 12z" fill="#8a8a8a" stroke="#fff" stroke-width=".7"/></svg>
<svg style="position:absolute;left:596px;top:429px" width="13" height="13" viewBox="0 0 13 13"><rect x=".8" y=".8" width="11.4" height="11.4" fill="none" stroke="#4f8fd6" stroke-width="1.1"/><path d="M3 10l6-6M5 4h4v4" fill="none" stroke="#666" stroke-width="1.2"/><rect x="1.5" y="8" width="3" height="3" fill="#666"/></svg>
<div style="position:absolute;left:624px;top:403px;width:262px;height:45px;background:#fff;border:1px solid #9c9c9c;box-sizing:border-box;box-shadow:inset 0 0 0 1px #d6d6d6;"></div>
<div class="t" style="left:630px;top:405.0px;font-size:12px;color:#888;font-weight:normal;font-style:normal;">Genehmiger des aktuellen Schritts oder ei...</div>
<svg style="position:absolute;left:867px;top:408px" width="14" height="12" viewBox="0 0 14 12"><circle cx="9.5" cy="3" r="2.7" fill="#8a8a8a"/><path d="M5.5 10c0-3 2-4 4-4s4 1 4 4z" fill="#8a8a8a"/><circle cx="4.5" cy="5" r="2.7" fill="#8a8a8a" stroke="#fff" stroke-width=".7"/><path d="M0 12c0-3 2-4.3 4.5-4.3S9 9 9 12z" fill="#8a8a8a" stroke="#fff" stroke-width=".7"/></svg>
<svg style="position:absolute;left:868px;top:429px" width="13" height="13" viewBox="0 0 13 13"><rect x=".8" y=".8" width="11.4" height="11.4" fill="none" stroke="#4f8fd6" stroke-width="1.1"/><path d="M3 10l6-6M5 4h4v4" fill="none" stroke="#666" stroke-width="1.2"/><rect x="1.5" y="8" width="3" height="3" fill="#666"/></svg>
<div style="position:absolute;left:896px;top:404px;width:122px;height:22px;background:#fff;border:1px solid #9c9c9c;box-sizing:border-box;box-shadow:inset 0 0 0 1px #d6d6d6;"></div>
<div class="t" style="left:902px;top:406.0px;font-size:12px;color:#888;font-weight:normal;font-style:normal;">Von</div>
<svg style="position:absolute;left:1000px;top:407px" width="15" height="15" viewBox="0 0 15 15"><rect x="1" y="2.5" width="13" height="12" fill="none" stroke="#8a8a8a" stroke-width="1.2"/><path d="M1 5h13" stroke="#4f8fd6" stroke-width="2.4"/><path d="M3.5 1v2.5M6 1v2.5M9 1v2.5M11.5 1v2.5" stroke="#4f8fd6"/><path d="M5.5 8.5h4l-2.5 4" fill="none" stroke="#8a8a8a" stroke-width="1"/></svg>
<div class="t" style="left:727px;width:600px;text-align:center;top:405.0px;font-size:12px;color:#666;font-weight:normal;font-style:normal;">-</div>
<div style="position:absolute;left:1036px;top:404px;width:122px;height:22px;background:#fff;border:1px solid #9c9c9c;box-sizing:border-box;box-shadow:inset 0 0 0 1px #d6d6d6;"></div>
<div class="t" style="left:1042px;top:406.0px;font-size:12px;color:#888;font-weight:normal;font-style:normal;">Bis</div>
<svg style="position:absolute;left:1140px;top:407px" width="15" height="15" viewBox="0 0 15 15"><rect x="1" y="2.5" width="13" height="12" fill="none" stroke="#8a8a8a" stroke-width="1.2"/><path d="M1 5h13" stroke="#4f8fd6" stroke-width="2.4"/><path d="M3.5 1v2.5M6 1v2.5M9 1v2.5M11.5 1v2.5" stroke="#4f8fd6"/><path d="M5.5 8.5h4l-2.5 4" fill="none" stroke="#8a8a8a" stroke-width="1"/></svg>
<div class="t" style="left:354px;top:454.0px;font-size:12px;color:#444;font-weight:normal;font-style:normal;">Endgültige Genehmigung</div>
<svg style="position:absolute;left:500px;top:456px" width="14" height="14" viewBox="0 0 14 14"><circle cx="7" cy="7" r="6.2" fill="none" stroke="#777" stroke-width="1.1"/><circle cx="7" cy="3.8" r="1" fill="#666"/><path d="M5.6 6h1.8v4.5M5.5 10.8h3.2" fill="none" stroke="#666" stroke-width="1.1"/></svg>
<div class="t" style="left:626px;top:454.0px;font-size:12px;color:#444;font-weight:normal;font-style:normal;">Frist (aktueller Schritt)</div>
<svg style="position:absolute;left:752px;top:456px" width="14" height="14" viewBox="0 0 14 14"><circle cx="7" cy="7" r="6.2" fill="none" stroke="#777" stroke-width="1.1"/><circle cx="7" cy="3.8" r="1" fill="#666"/><path d="M5.6 6h1.8v4.5M5.5 10.8h3.2" fill="none" stroke="#666" stroke-width="1.1"/></svg>
<div class="t" style="left:898px;top:454.0px;font-size:12px;color:#444;font-weight:normal;font-style:normal;">Startdatum</div>
<svg style="position:absolute;left:967px;top:456px" width="14" height="14" viewBox="0 0 14 14"><circle cx="7" cy="7" r="6.2" fill="none" stroke="#777" stroke-width="1.1"/><circle cx="7" cy="3.8" r="1" fill="#666"/><path d="M5.6 6h1.8v4.5M5.5 10.8h3.2" fill="none" stroke="#666" stroke-width="1.1"/></svg>
<div style="position:absolute;left:352px;top:478px;width:122px;height:22px;background:#fff;border:1px solid #9c9c9c;box-sizing:border-box;box-shadow:inset 0 0 0 1px #d6d6d6;"></div>
<div class="t" style="left:358px;top:480.0px;font-size:12px;color:#888;font-weight:normal;font-style:normal;">Von</div>
<svg style="position:absolute;left:456px;top:481px" width="15" height="15" viewBox="0 0 15 15"><rect x="1" y="2.5" width="13" height="12" fill="none" stroke="#8a8a8a" stroke-width="1.2"/><path d="M1 5h13" stroke="#4f8fd6" stroke-width="2.4"/><path d="M3.5 1v2.5M6 1v2.5M9 1v2.5M11.5 1v2.5" stroke="#4f8fd6"/><path d="M5.5 8.5h4l-2.5 4" fill="none" stroke="#8a8a8a" stroke-width="1"/></svg>
<div class="t" style="left:183px;width:600px;text-align:center;top:479.0px;font-size:12px;color:#666;font-weight:normal;font-style:normal;">-</div>
<div style="position:absolute;left:492px;top:478px;width:122px;height:22px;background:#fff;border:1px solid #9c9c9c;box-sizing:border-box;box-shadow:inset 0 0 0 1px #d6d6d6;"></div>
<div class="t" style="left:498px;top:480.0px;font-size:12px;color:#888;font-weight:normal;font-style:normal;">Bis</div>
<svg style="position:absolute;left:596px;top:481px" width="15" height="15" viewBox="0 0 15 15"><rect x="1" y="2.5" width="13" height="12" fill="none" stroke="#8a8a8a" stroke-width="1.2"/><path d="M1 5h13" stroke="#4f8fd6" stroke-width="2.4"/><path d="M3.5 1v2.5M6 1v2.5M9 1v2.5M11.5 1v2.5" stroke="#4f8fd6"/><path d="M5.5 8.5h4l-2.5 4" fill="none" stroke="#8a8a8a" stroke-width="1"/></svg>
<div style="position:absolute;left:624px;top:478px;width:122px;height:22px;background:#fff;border:1px solid #9c9c9c;box-sizing:border-box;box-shadow:inset 0 0 0 1px #d6d6d6;"></div>
<div class="t" style="left:630px;top:480.0px;font-size:12px;color:#888;font-weight:normal;font-style:normal;">Von</div>
<svg style="position:absolute;left:728px;top:481px" width="15" height="15" viewBox="0 0 15 15"><rect x="1" y="2.5" width="13" height="12" fill="none" stroke="#8a8a8a" stroke-width="1.2"/><path d="M1 5h13" stroke="#4f8fd6" stroke-width="2.4"/><path d="M3.5 1v2.5M6 1v2.5M9 1v2.5M11.5 1v2.5" stroke="#4f8fd6"/><path d="M5.5 8.5h4l-2.5 4" fill="none" stroke="#8a8a8a" stroke-width="1"/></svg>
<div class="t" style="left:455px;width:600px;text-align:center;top:479.0px;font-size:12px;color:#666;font-weight:normal;font-style:normal;">-</div>
<div style="position:absolute;left:764px;top:478px;width:122px;height:22px;background:#fff;border:1px solid #9c9c9c;box-sizing:border-box;box-shadow:inset 0 0 0 1px #d6d6d6;"></div>
<div class="t" style="left:770px;top:480.0px;font-size:12px;color:#888;font-weight:normal;font-style:normal;">Bis</div>
<svg style="position:absolute;left:868px;top:481px" width="15" height="15" viewBox="0 0 15 15"><rect x="1" y="2.5" width="13" height="12" fill="none" stroke="#8a8a8a" stroke-width="1.2"/><path d="M1 5h13" stroke="#4f8fd6" stroke-width="2.4"/><path d="M3.5 1v2.5M6 1v2.5M9 1v2.5M11.5 1v2.5" stroke="#4f8fd6"/><path d="M5.5 8.5h4l-2.5 4" fill="none" stroke="#8a8a8a" stroke-width="1"/></svg>
<div style="position:absolute;left:896px;top:478px;width:122px;height:22px;background:#fff;border:1px solid #9c9c9c;box-sizing:border-box;box-shadow:inset 0 0 0 1px #d6d6d6;"></div>
<div class="t" style="left:902px;top:480.0px;font-size:12px;color:#888;font-weight:normal;font-style:normal;">Von</div>
<svg style="position:absolute;left:1000px;top:481px" width="15" height="15" viewBox="0 0 15 15"><rect x="1" y="2.5" width="13" height="12" fill="none" stroke="#8a8a8a" stroke-width="1.2"/><path d="M1 5h13" stroke="#4f8fd6" stroke-width="2.4"/><path d="M3.5 1v2.5M6 1v2.5M9 1v2.5M11.5 1v2.5" stroke="#4f8fd6"/><path d="M5.5 8.5h4l-2.5 4" fill="none" stroke="#8a8a8a" stroke-width="1"/></svg>
<div class="t" style="left:727px;width:600px;text-align:center;top:479.0px;font-size:12px;color:#666;font-weight:normal;font-style:normal;">-</div>
<div style="position:absolute;left:1036px;top:478px;width:122px;height:22px;background:#fff;border:1px solid #9c9c9c;box-sizing:border-box;box-shadow:inset 0 0 0 1px #d6d6d6;"></div>
<div class="t" style="left:1042px;top:480.0px;font-size:12px;color:#888;font-weight:normal;font-style:normal;">Bis</div>
<svg style="position:absolute;left:1140px;top:481px" width="15" height="15" viewBox="0 0 15 15"><rect x="1" y="2.5" width="13" height="12" fill="none" stroke="#8a8a8a" stroke-width="1.2"/><path d="M1 5h13" stroke="#4f8fd6" stroke-width="2.4"/><path d="M3.5 1v2.5M6 1v2.5M9 1v2.5M11.5 1v2.5" stroke="#4f8fd6"/><path d="M5.5 8.5h4l-2.5 4" fill="none" stroke="#8a8a8a" stroke-width="1"/></svg>
<div class="t" style="left:354px;top:505.0px;font-size:12px;color:#444;font-weight:normal;font-style:normal;">Eilt</div>
<div class="t" style="left:626px;top:505.0px;font-size:12px;color:#444;font-weight:normal;font-style:normal;">Genehmigungstyp</div>
<svg style="position:absolute;left:871px;top:506px" width="15" height="14" viewBox="0 0 15 14"><path d="M7.5 .5l2.1 4.5 4.9.6-3.6 3.4 1 4.9-4.4-2.5-4.4 2.5 1-4.9L.5 5.6l4.9-.6z" fill="#777"/></svg>
<div class="t" style="left:898px;top:505.0px;font-size:12px;color:#444;font-weight:normal;font-style:normal;">Gestartet</div>
<div style="position:absolute;left:352px;top:528px;width:262px;height:22px;background:#fff;border:1px solid #9c9c9c;box-sizing:border-box;box-shadow:inset 0 0 0 1px #d6d6d6;"></div>
<div class="t" style="left:358px;top:530.0px;font-size:12px;color:#777;font-weight:normal;font-style:normal;">Eilt</div>
<svg style="position:absolute;left:596px;top:535px" width="12" height="8" viewBox="0 0 12 8"><path d="M0 0h12L6 8z" fill="#333"/></svg>
<div style="position:absolute;left:624px;top:528px;width:262px;height:22px;background:#fff;border:1px solid #9c9c9c;box-sizing:border-box;box-shadow:inset 0 0 0 1px #d6d6d6;"></div>
<div class="t" style="left:630px;top:530.0px;font-size:12px;color:#444;font-weight:normal;font-style:normal;">Zur Genehmigung</div>
<svg style="position:absolute;left:868px;top:535px" width="12" height="8" viewBox="0 0 12 8"><path d="M0 0h12L6 8z" fill="#333"/></svg>
<div style="position:absolute;left:896px;top:528px;width:262px;height:22px;background:#fff;border:1px solid #9c9c9c;box-sizing:border-box;box-shadow:inset 0 0 0 1px #d6d6d6;"></div>
<div class="t" style="left:902px;top:530.0px;font-size:12px;color:#444;font-weight:normal;font-style:normal;"></div>
<svg style="position:absolute;left:1140px;top:535px" width="12" height="8" viewBox="0 0 12 8"><path d="M0 0h12L6 8z" fill="#333"/></svg>
<div style="position:absolute;left:431px;top:575px;width:1px;height:26px;background:#dcdcdc;"></div>
<div style="position:absolute;left:735px;top:575px;width:1px;height:26px;background:#dcdcdc;"></div>
<div style="position:absolute;left:843px;top:575px;width:1px;height:26px;background:#dcdcdc;"></div>
<div style="position:absolute;left:1000px;top:575px;width:1px;height:26px;background:#dcdcdc;"></div>
<div style="position:absolute;left:343px;top:601px;width:824px;height:1px;background:#e0e0e0;"></div>
<div class="t" style="left:459px;top:580.0px;font-size:12px;color:#444;font-weight:normal;font-style:normal;">Betreff</div>
<div class="t" style="left:741px;top:580.0px;font-size:12px;color:#444;font-weight:normal;font-style:normal;">Dokumente...</div>
<div class="t" style="left:850px;top:580.0px;font-size:12px;color:#444;font-weight:normal;font-style:normal;">Sortierdatum</div>
<svg style="position:absolute;left:981px;top:581px" width="10" height="16" viewBox="0 0 10 16"><path d="M5 1v13M1.5 10.5L5 14.5l3.5-4" fill="none" stroke="#333" stroke-width="1.6"/></svg>
<div class="t" style="left:1007px;top:580.0px;font-size:12px;color:#444;font-weight:normal;font-style:normal;">Von</div>
<div style="position:absolute;left:343px;top:602px;width:824px;height:30px;background:#f0f0f0;"></div>
<svg style="position:absolute;left:351px;top:613px" width="12" height="8" viewBox="0 0 12 8"><path d="M1 1.5l5 5 5-5" fill="none" stroke="#444" stroke-width="1.5"/></svg>
<div class="t" style="left:371px;top:608.0px;font-size:12px;color:#555;font-weight:normal;font-style:normal;">Sortierdatum:&nbsp; Älter</div>
<div class="t" style="right:588px;text-align:right;top:608.0px;font-size:12px;color:#555;font-weight:normal;font-style:normal;">29 Element(e)</div>
<div style="position:absolute;left:1167px;top:575px;width:16px;height:311px;background:#f0f0f0;"></div>
<div style="position:absolute;left:1167px;top:575px;width:16px;height:16px;background:#fff;border:1px solid #b8b8b8;box-sizing:border-box;"></div>
<svg style="position:absolute;left:1170px;top:579px" width="10" height="7" viewBox="0 0 10 7"><path d="M0 7h10L5 0z" fill="#444"/></svg>
<div style="position:absolute;left:1167px;top:591px;width:16px;height:94px;background:#fff;border:1px solid #b8b8b8;box-sizing:border-box;"></div>
<div style="position:absolute;left:1167px;top:870px;width:16px;height:16px;background:#fff;border:1px solid #b8b8b8;box-sizing:border-box;"></div>
<svg style="position:absolute;left:1170px;top:874px" width="10" height="7" viewBox="0 0 10 7"><path d="M0 0h10L5 7z" fill="#444"/></svg>
<div style="position:absolute;left:343px;top:886px;width:824px;height:16px;background:#f0f0f0;"></div>
<div style="position:absolute;left:343px;top:886px;width:17px;height:16px;background:#fff;border:1px solid #b0b0b0;box-sizing:border-box;"></div>
<svg style="position:absolute;left:348px;top:889px" width="6" height="10" viewBox="0 0 6 10"><path d="M6 0v10L0 5z" fill="#444"/></svg>
<div style="position:absolute;left:358px;top:886px;width:678px;height:16px;background:#fff;border:1px solid #b0b0b0;box-sizing:border-box;"></div>
<div style="position:absolute;left:1151px;top:886px;width:16px;height:16px;background:#fff;border:1px solid #b0b0b0;box-sizing:border-box;"></div>
<svg style="position:absolute;left:1156px;top:889px" width="6" height="10" viewBox="0 0 6 10"><path d="M0 0v10L6 5z" fill="#444"/></svg>
<svg style="position:absolute;left:377.5px;top:638.5px" width="15" height="15" viewBox="0 0 15 15"><circle cx="7.5" cy="7.5" r="7" fill="#4a86c5"/><path d="M4 7.8l2.5 2.5 4.6-4.8" fill="none" stroke="#fff" stroke-width="1.9"/></svg>
<div class="t" style="left:459px;top:637.0px;font-size:12px;color:#333;font-weight:normal;font-style:normal;">Konferenz 2021</div>
<div class="t" style="left:741px;top:637.0px;font-size:12px;color:#333;font-weight:normal;font-style:normal;">706</div>
<div class="t" style="left:850px;top:637.0px;font-size:12px;color:#333;font-weight:normal;font-style:normal;">11-11-2021 09:35</div>
<div class="t" style="left:1007px;top:637.0px;font-size:12px;color:#333;font-weight:normal;font-style:normal;">Florian Lutz</div>
<svg style="position:absolute;left:377.5px;top:666.5px" width="15" height="15" viewBox="0 0 15 15"><circle cx="7.5" cy="7.5" r="7" fill="#4a86c5"/><path d="M4 7.8l2.5 2.5 4.6-4.8" fill="none" stroke="#fff" stroke-width="1.9"/></svg>
<div class="t" style="left:459px;top:665.0px;font-size:12px;color:#333;font-weight:normal;font-style:normal;">Sitzungsprotokolle</div>
<div class="t" style="left:741px;top:665.0px;font-size:12px;color:#333;font-weight:normal;font-style:normal;">482</div>
<div class="t" style="left:850px;top:665.0px;font-size:12px;color:#333;font-weight:normal;font-style:normal;">20-01-2021 12:16</div>
<div class="t" style="left:1007px;top:665.0px;font-size:12px;color:#333;font-weight:normal;font-style:normal;">Florian Lutz</div>
<svg style="position:absolute;left:377.5px;top:694.5px" width="15" height="15" viewBox="0 0 15 15"><circle cx="7.5" cy="7.5" r="7" fill="#e8879c"/><path d="M4 7.8l2.5 2.5 4.6-4.8" fill="none" stroke="#fff" stroke-width="1.9"/></svg>
<svg style="position:absolute;left:403.5px;top:694px" width="9" height="16" viewBox="0 0 9 16"><path d="M7.5 11.5V4A3 3 0 0 0 1.5 4V13A2.2 2.2 0 0 0 5.8 13V5.5A1.1 1.1 0 0 0 3.6 5.5V11" fill="none" stroke="#9a9a9a" stroke-width="1.2"/></svg>
<div class="t" style="left:459px;top:693.0px;font-size:12px;color:#333;font-weight:normal;font-style:normal;">3. Quartals- Meeting 2020</div>
<div class="t" style="left:741px;top:693.0px;font-size:12px;color:#333;font-weight:normal;font-style:normal;">1096</div>
<div class="t" style="left:850px;top:693.0px;font-size:12px;color:#333;font-weight:normal;font-style:normal;">20-11-2020 11:35</div>
<div class="t" style="left:1007px;top:693.0px;font-size:12px;color:#333;font-weight:normal;font-style:normal;">Florian Lutz</div>
<svg style="position:absolute;left:377.5px;top:722.5px" width="15" height="15" viewBox="0 0 15 15"><circle cx="7.5" cy="7.5" r="7" fill="#4a86c5"/><circle cx="7.5" cy="5.3" r="2.6" fill="#fff"/><circle cx="7.5" cy="5.3" r="1.1" fill="#4a86c5"/><path d="M4.2 12.3l.8-3.5h5l.8 3.5z" fill="#fff"/><path d="M7.5 8.5v4" stroke="#4a86c5" stroke-width="1"/></svg>
<svg style="position:absolute;left:403.5px;top:722px" width="9" height="16" viewBox="0 0 9 16"><path d="M7.5 11.5V4A3 3 0 0 0 1.5 4V13A2.2 2.2 0 0 0 5.8 13V5.5A1.1 1.1 0 0 0 3.6 5.5V11" fill="none" stroke="#9a9a9a" stroke-width="1.2"/></svg>
<div class="t" style="left:459px;top:721.0px;font-size:12px;color:#333;font-weight:normal;font-style:normal;">Vertragsentwurf</div>
<div class="t" style="left:741px;top:721.0px;font-size:12px;color:#333;font-weight:normal;font-style:normal;">1166</div>
<div class="t" style="left:850px;top:721.0px;font-size:12px;color:#333;font-weight:normal;font-style:normal;">20-11-2020 11:35</div>
<div class="t" style="left:1007px;top:721.0px;font-size:12px;color:#333;font-weight:normal;font-style:normal;">Florian Lutz</div>
<svg style="position:absolute;left:377.5px;top:750.5px" width="15" height="15" viewBox="0 0 15 15"><circle cx="7.5" cy="7.5" r="7" fill="#4a86c5"/><path d="M4 7.8l2.5 2.5 4.6-4.8" fill="none" stroke="#fff" stroke-width="1.9"/></svg>
<svg style="position:absolute;left:403.5px;top:750px" width="9" height="16" viewBox="0 0 9 16"><path d="M7.5 11.5V4A3 3 0 0 0 1.5 4V13A2.2 2.2 0 0 0 5.8 13V5.5A1.1 1.1 0 0 0 3.6 5.5V11" fill="none" stroke="#9a9a9a" stroke-width="1.2"/></svg>
<div class="t" style="left:459px;top:749.0px;font-size:12px;color:#333;font-weight:normal;font-style:normal;">Tagesordnung</div>
<div class="t" style="left:741px;top:749.0px;font-size:12px;color:#333;font-weight:normal;font-style:normal;">242</div>
<div class="t" style="left:850px;top:749.0px;font-size:12px;color:#333;font-weight:normal;font-style:normal;">22-10-2020 14:40</div>
<div class="t" style="left:1007px;top:749.0px;font-size:12px;color:#333;font-weight:normal;font-style:normal;">Florian Lutz</div>
<div style="position:absolute;left:343px;top:772px;width:824px;height:28px;background:#a8cdee;"></div>
<svg style="position:absolute;left:377.5px;top:778.5px" width="15" height="15" viewBox="0 0 15 15"><circle cx="7.5" cy="7.5" r="7" fill="#4a86c5"/><circle cx="7.5" cy="5.3" r="2.6" fill="#fff"/><circle cx="7.5" cy="5.3" r="1.1" fill="#4a86c5"/><path d="M4.2 12.3l.8-3.5h5l.8 3.5z" fill="#fff"/><path d="M7.5 8.5v4" stroke="#4a86c5" stroke-width="1"/></svg>
<svg style="position:absolute;left:403.5px;top:778px" width="9" height="16" viewBox="0 0 9 16"><path d="M7.5 11.5V4A3 3 0 0 0 1.5 4V13A2.2 2.2 0 0 0 5.8 13V5.5A1.1 1.1 0 0 0 3.6 5.5V11" fill="none" stroke="#9a9a9a" stroke-width="1.2"/></svg>
<div class="t" style="left:459px;top:777.0px;font-size:12px;color:#333;font-weight:normal;font-style:normal;">Antwortentwurf zu Frage 243 – Überwachung vo...</div>
<div class="t" style="left:741px;top:777.0px;font-size:12px;color:#333;font-weight:normal;font-style:normal;">712</div>
<div class="t" style="left:850px;top:777.0px;font-size:12px;color:#333;font-weight:normal;font-style:normal;">07-09-2020 11:07</div>
<div class="t" style="left:1007px;top:777.0px;font-size:12px;color:#333;font-weight:normal;font-style:normal;">Florian Lutz</div>
<svg style="position:absolute;left:377.5px;top:806.5px" width="15" height="15" viewBox="0 0 15 15"><circle cx="7.5" cy="7.5" r="7" fill="#4a86c5"/><circle cx="7.5" cy="5.3" r="2.6" fill="#fff"/><circle cx="7.5" cy="5.3" r="1.1" fill="#4a86c5"/><path d="M4.2 12.3l.8-3.5h5l.8 3.5z" fill="#fff"/><path d="M7.5 8.5v4" stroke="#4a86c5" stroke-width="1"/></svg>
<svg style="position:absolute;left:403.5px;top:806px" width="9" height="16" viewBox="0 0 9 16"><path d="M7.5 11.5V4A3 3 0 0 0 1.5 4V13A2.2 2.2 0 0 0 5.8 13V5.5A1.1 1.1 0 0 0 3.6 5.5V11" fill="none" stroke="#9a9a9a" stroke-width="1.2"/></svg>
<svg style="position:absolute;left:435px;top:806px" width="16" height="15" viewBox="0 0 16 15"><path d="M10.2 11.8C13 11 14.5 9 14.5 6.7 14.5 3.8 11.8 1.5 8 1.5S1.5 3.8 1.5 6.7 4 11.8 8 11.8L10.5 13.8z" fill="none" stroke="#999" stroke-width="1.1" stroke-linejoin="round"/></svg>
<div class="t" style="left:459px;top:805.0px;font-size:12px;color:#333;font-weight:normal;font-style:normal;">Verbraucherschutzinformationen</div>
<div class="t" style="left:741px;top:805.0px;font-size:12px;color:#333;font-weight:normal;font-style:normal;">665</div>
<div class="t" style="left:850px;top:805.0px;font-size:12px;color:#333;font-weight:normal;font-style:normal;">17-08-2020 15:11</div>
<div class="t" style="left:1007px;top:805.0px;font-size:12px;color:#333;font-weight:normal;font-style:normal;">Florian Lutz</div>
<svg style="position:absolute;left:377.5px;top:834.5px" width="15" height="15" viewBox="0 0 15 15"><circle cx="7.5" cy="7.5" r="7" fill="#e8879c"/><path d="M4 7.8l2.5 2.5 4.6-4.8" fill="none" stroke="#fff" stroke-width="1.9"/></svg>
<svg style="position:absolute;left:403.5px;top:834px" width="9" height="16" viewBox="0 0 9 16"><path d="M7.5 11.5V4A3 3 0 0 0 1.5 4V13A2.2 2.2 0 0 0 5.8 13V5.5A1.1 1.1 0 0 0 3.6 5.5V11" fill="none" stroke="#9a9a9a" stroke-width="1.2"/></svg>
<svg style="position:absolute;left:436px;top:835px" width="14" height="13" viewBox="0 0 14 13"><path d="M1 1h5l1.5 2H13v9H1z" fill="none" stroke="#f0c36b" stroke-width="1.2"/><path d="M7 3l6 5" stroke="#f0c36b" stroke-width="1"/></svg>
<div class="t" style="left:459px;top:833.0px;font-size:12px;color:#333;font-weight:normal;font-style:normal;">Teamfindungsstag</div>
<div class="t" style="left:741px;top:833.0px;font-size:12px;color:#333;font-weight:normal;font-style:normal;">1100</div>
<div class="t" style="left:850px;top:833.0px;font-size:12px;color:#333;font-weight:normal;font-style:normal;">05-08-2020 12:52</div>
<div class="t" style="left:1007px;top:833.0px;font-size:12px;color:#333;font-weight:normal;font-style:normal;">Florian Lutz</div>
<svg style="position:absolute;left:377.5px;top:862.5px" width="15" height="15" viewBox="0 0 15 15"><circle cx="7.5" cy="7.5" r="7" fill="#e8879c"/><path d="M4 7.8l2.5 2.5 4.6-4.8" fill="none" stroke="#fff" stroke-width="1.9"/></svg>
<svg style="position:absolute;left:403.5px;top:862px" width="9" height="16" viewBox="0 0 9 16"><path d="M7.5 11.5V4A3 3 0 0 0 1.5 4V13A2.2 2.2 0 0 0 5.8 13V5.5A1.1 1.1 0 0 0 3.6 5.5V11" fill="none" stroke="#9a9a9a" stroke-width="1.2"/></svg>
<div class="t" style="left:459px;top:861.0px;font-size:12px;color:#333;font-weight:normal;font-style:normal;">Reiseabrechnung</div>
<div class="t" style="left:741px;top:861.0px;font-size:12px;color:#333;font-weight:normal;font-style:normal;">579</div>
<div class="t" style="left:850px;top:861.0px;font-size:12px;color:#333;font-weight:normal;font-style:normal;">29-07-2020 13:27</div>
<div class="t" style="left:1007px;top:861.0px;font-size:12px;color:#333;font-weight:normal;font-style:normal;">Florian Lutz</div>
<div style="position:absolute;left:1189px;top:229px;width:1558px;height:678px;background:#ffffff;"></div>
<div class="t" style="left:1201px;top:202.0px;font-size:16.3px;color:#555;font-weight:normal;font-style:normal;">Dokument</div>
<div class="t" style="left:1293px;top:202.0px;font-size:16.3px;color:#555;font-weight:normal;font-style:normal;">Beteiligte</div>
<div class="t" style="left:1377px;top:202.0px;font-size:15.6px;color:#3c3c3c;font-weight:bold;font-style:normal;">Genehmigung</div>
<div style="position:absolute;left:1377px;top:227px;width:103px;height:2px;background:#2d6ccf;"></div>
<svg style="position:absolute;left:1730px;top:197px" width="13" height="13" viewBox="0 0 13 13"><rect x=".8" y=".8" width="11.4" height="11.4" fill="none" stroke="#4f8fd6" stroke-width="1.1"/><path d="M3 10l6-6M5 4h4v4" fill="none" stroke="#666" stroke-width="1.2"/><rect x="1.5" y="8" width="3" height="3" fill="#666"/></svg>
<div style="position:absolute;left:1446px;top:229px;width:2px;height:680px;background:#dcdcdc;"></div>
<div style="position:absolute;left:1201px;top:241px;width:233px;height:28px;background:#f0f0f0;"></div>
<div class="t" style="left:1213px;top:246.0px;font-size:12px;color:#333;font-weight:normal;font-style:normal;">Verantwortlicher:</div>
<div class="t" style="left:1314px;top:246.0px;font-size:12px;color:#333;font-weight:normal;font-style:normal;">Florian Lutz</div>
<div class="t" style="left:1201px;top:276.0px;font-size:12px;color:#555;font-weight:normal;font-style:normal;">Schritt 1:</div>
<div class="t" style="right:315px;text-align:right;top:276.0px;font-size:12px;color:#555;font-weight:normal;font-style:normal;">Frist am 24-02-2018</div>
<div style="position:absolute;left:1201px;top:296px;width:233px;height:28px;background:#f0f0f0;"></div>
<svg style="position:absolute;left:1213.5px;top:302.5px" width="15" height="15" viewBox="0 0 15 15"><circle cx="7.5" cy="7.5" r="7" fill="#4a86c5"/><path d="M4 7.8l2.5 2.5 4.6-4.8" fill="none" stroke="#fff" stroke-width="1.9"/></svg>
<div class="t" style="left:1235px;top:301.0px;font-size:12px;color:#333;font-weight:normal;font-style:normal;">Anna Schneider</div>
<div class="t" style="left:1201px;top:334.0px;font-size:12px;color:#555;font-weight:normal;font-style:normal;">Schritt 2:</div>
<div style="position:absolute;left:1201px;top:354px;width:233px;height:28px;background:#f0f0f0;"></div>
<svg style="position:absolute;left:1213.5px;top:360.5px" width="15" height="15" viewBox="0 0 15 15"><circle cx="7.5" cy="7.5" r="7" fill="#4a86c5"/><path d="M4 7.8l2.5 2.5 4.6-4.8" fill="none" stroke="#fff" stroke-width="1.9"/></svg>
<div class="t" style="left:1235px;top:359.0px;font-size:12px;color:#333;font-weight:normal;font-style:normal;">Simone Meyer</div>
<svg style="position:absolute;left:1406px;top:363px" width="14" height="9" viewBox="0 0 14 9"><path d="M1.5 7.5l5.5-5.5 5.5 5.5" fill="none" stroke="#555" stroke-width="1.8"/></svg>
<div style="position:absolute;left:1201px;top:382px;width:233px;height:1px;background:#c8c8c8;"></div>
<div style="position:absolute;left:1201px;top:383px;width:233px;height:78px;background:#f0f0f0;"></div>
<div class="t" style="left:1211px;top:394.0px;font-size:12px;color:#333;font-weight:normal;font-style:normal;">Kommentar:</div>
<div class="t" style="left:1221px;top:418.0px;font-size:11.7px;color:#333;font-weight:normal;font-style:normal;">Ich habe einen Verweis auf Frage 235</div>
<div class="t" style="left:1221px;top:434.0px;font-size:12px;color:#333;font-weight:normal;font-style:normal;">hinzugefügt</div>
<div class="t" style="left:1464px;top:242.0px;font-size:12px;color:#555;font-weight:normal;font-style:normal;">20-02-2018 15:08</div>
<svg style="position:absolute;left:1464px;top:266px" width="15" height="15" viewBox="0 0 15 15"><circle cx="7.5" cy="7.5" r="7" fill="#4a86c5"/><path d="M3.5 7.5h7M7.5 4.3l3.3 3.2-3.3 3.2" fill="none" stroke="#fff" stroke-width="1.8"/></svg>
<div class="t" style="left:1486px;top:264.0px;font-size:11.8px;color:#333;font-weight:bold;font-style:italic;">Florian Lutz startet die Genehmigung</div>
<div style="position:absolute;left:1458px;top:293px;width:268px;height:2px;background:#d8d8d8;"></div>
<div class="t" style="left:1464px;top:310.0px;font-size:12px;color:#555;font-weight:normal;font-style:normal;">20-02-2018 15:20</div>
<svg style="position:absolute;left:1463.5px;top:334.5px" width="15" height="15" viewBox="0 0 15 15"><circle cx="7.5" cy="7.5" r="7" fill="#4a86c5"/><path d="M4 7.8l2.5 2.5 4.6-4.8" fill="none" stroke="#fff" stroke-width="1.9"/></svg>
<div class="t" style="left:1486px;top:332.0px;font-size:11.6px;color:#444;font-weight:normal;font-style:italic;">Anna Schneider (Schritt 1) hat genehmigt</div>
<div style="position:absolute;left:1458px;top:361px;width:268px;height:2px;background:#d8d8d8;"></div>
<div class="t" style="left:1464px;top:378.0px;font-size:12px;color:#555;font-weight:normal;font-style:normal;">20-02-2018 15:31</div>
<svg style="position:absolute;left:1463.5px;top:402.5px" width="15" height="15" viewBox="0 0 15 15"><circle cx="7.5" cy="7.5" r="7" fill="#4a86c5"/><path d="M4 7.8l2.5 2.5 4.6-4.8" fill="none" stroke="#fff" stroke-width="1.9"/></svg>
<div class="t" style="left:1486px;top:400.0px;font-size:11.6px;color:#444;font-weight:normal;font-style:italic;">Simone Meyer (Schritt 2) hat genehmigt</div>
<div class="t" style="left:1464px;top:422.0px;font-size:11.7px;color:#555;font-weight:normal;font-style:normal;">Ich habe einen Verweis auf Frage 235</div>
<div class="t" style="left:1464px;top:438.0px;font-size:12px;color:#555;font-weight:normal;font-style:normal;">hinzugefügt</div>
<svg style="position:absolute;left:1704px;top:439px" width="16" height="17" viewBox="0 0 16 17"><rect x="1" y="3" width="9" height="12" fill="#fff" stroke="#888" stroke-width="1.1"/><path d="M5 3V1h6l3 3v9h-4" fill="none" stroke="#888" stroke-width="1.1"/></svg>
<div style="position:absolute;left:0px;top:909px;width:1749px;height:20px;background:#2170ce;"></div>
<div style="position:absolute;left:0px;top:928px;width:1749px;height:1px;background:#1a5fb4;"></div>
<div class="t" style="left:8px;top:910.0px;font-size:11.8px;color:#fff;font-weight:normal;font-style:normal;">29 Ergebnisse – aktualisiert heute 13:03 (vor 2 Minuten)</div>
<div class="t" style="left:1589px;top:910.0px;font-size:12px;color:#fff;font-weight:normal;font-style:normal;">Vorgang: ---- - ----</div>
<svg style="position:absolute;left:1693px;top:911px" width="15" height="15" viewBox="0 0 15 15"><circle cx="7.5" cy="8.5" r="5.5" fill="none" stroke="#fff" stroke-width="1.6"/><path d="M7.5 8.5V5.5M5.5 1.5h4" stroke="#fff" stroke-width="1.6"/></svg>
<svg style="position:absolute;left:1710px;top:910px" width="15" height="15" viewBox="0 0 15 15"><path d="M1.5 2v5l7 7 5.5-5.5-7-7H2z" fill="none" stroke="#fff" stroke-width="1.4"/><circle cx="4.5" cy="5" r="1" fill="#fff"/></svg>
<div style="position:absolute;left:0px;top:65px;width:1px;height:864px;background:#0f50a2;"></div>
<div style="position:absolute;left:1px;top:65px;width:1px;height:844px;background:#b8d0ec;"></div>
<div style="position:absolute;left:1748px;top:65px;width:1px;height:864px;background:#0f50a2;"></div>
<div style="position:absolute;left:1747px;top:65px;width:1px;height:844px;background:#b8d0ec;"></div>
<div style="position:absolute;left:0px;top:0px;width:1px;height:65px;background:#1a5fb4;"></div>
<div style="position:absolute;left:1748px;top:0px;width:1px;height:65px;background:#1a5fb4;"></div>
<div style="position:absolute;left:8px;top:324px;width:317px;height:34px;border:3px solid #ff0000;box-sizing:border-box"></div>
<div style="position:absolute;left:267px;top:318px;width:3px;height:6px;background:#ee1c25;"></div>
<div style="position:absolute;left:238.5px;top:260.5px;width:59px;height:59px;border-radius:50%;background:#ee1c25;"></div>
<div style="position:absolute;left:238px;top:258.5px;width:60px;height:60px;color:#fff;font-family:'Liberation Sans', sans-serif;font-weight:bold;font-size:32px;line-height:60px;text-align:center;-webkit-text-stroke:1px #fff">1</div>
<div style="position:absolute;left:1369px;top:69px;width:63px;height:73px;border:3px solid #ff0000;box-sizing:border-box"></div>
<div style="position:absolute;left:1398px;top:60px;width:3px;height:9px;background:#ee1c25;"></div>
<div style="position:absolute;left:1369.5px;top:3.5px;width:59px;height:59px;border-radius:50%;background:#ee1c25;"></div>
<div style="position:absolute;left:1369px;top:1.5px;width:60px;height:60px;color:#fff;font-family:'Liberation Sans', sans-serif;font-weight:bold;font-size:32px;line-height:60px;text-align:center;-webkit-text-stroke:1px #fff">2</div>
<div style="position:absolute;left:333px;top:270px;width:834px;height:302px;border:3px solid #ff0000;box-sizing:border-box"></div>
<div style="position:absolute;left:714.5px;top:393.5px;width:59px;height:59px;border-radius:50%;background:#ee1c25;"></div>
<div style="position:absolute;left:714px;top:391.5px;width:60px;height:60px;color:#fff;font-family:'Liberation Sans', sans-serif;font-weight:bold;font-size:32px;line-height:60px;text-align:center;-webkit-text-stroke:1px #fff">3</div>
<div style="position:absolute;left:921px;top:233px;width:135px;height:31px;border:3px solid #ff0000;box-sizing:border-box"></div>
<div style="position:absolute;left:988px;top:225px;width:3px;height:8px;background:#ee1c25;"></div>
<div style="position:absolute;left:960.5px;top:168.5px;width:59px;height:59px;border-radius:50%;background:#ee1c25;"></div>
<div style="position:absolute;left:960px;top:166.5px;width:60px;height:60px;color:#fff;font-family:'Liberation Sans', sans-serif;font-weight:bold;font-size:32px;line-height:60px;text-align:center;-webkit-text-stroke:1px #fff">4</div>
<div style="position:absolute;left:8px;top:603px;width:315px;height:36px;border:3px solid #ff0000;box-sizing:border-box"></div>
<div style="position:absolute;left:246px;top:594px;width:3px;height:9px;background:#ee1c25;"></div>
<div style="position:absolute;left:219.0px;top:537.5px;width:59px;height:59px;border-radius:50%;background:#ee1c25;"></div>
<div style="position:absolute;left:218.5px;top:535.5px;width:60px;height:60px;color:#fff;font-family:'Liberation Sans', sans-serif;font-weight:bold;font-size:32px;line-height:60px;text-align:center;-webkit-text-stroke:1px #fff">5</div>
</body></html>
